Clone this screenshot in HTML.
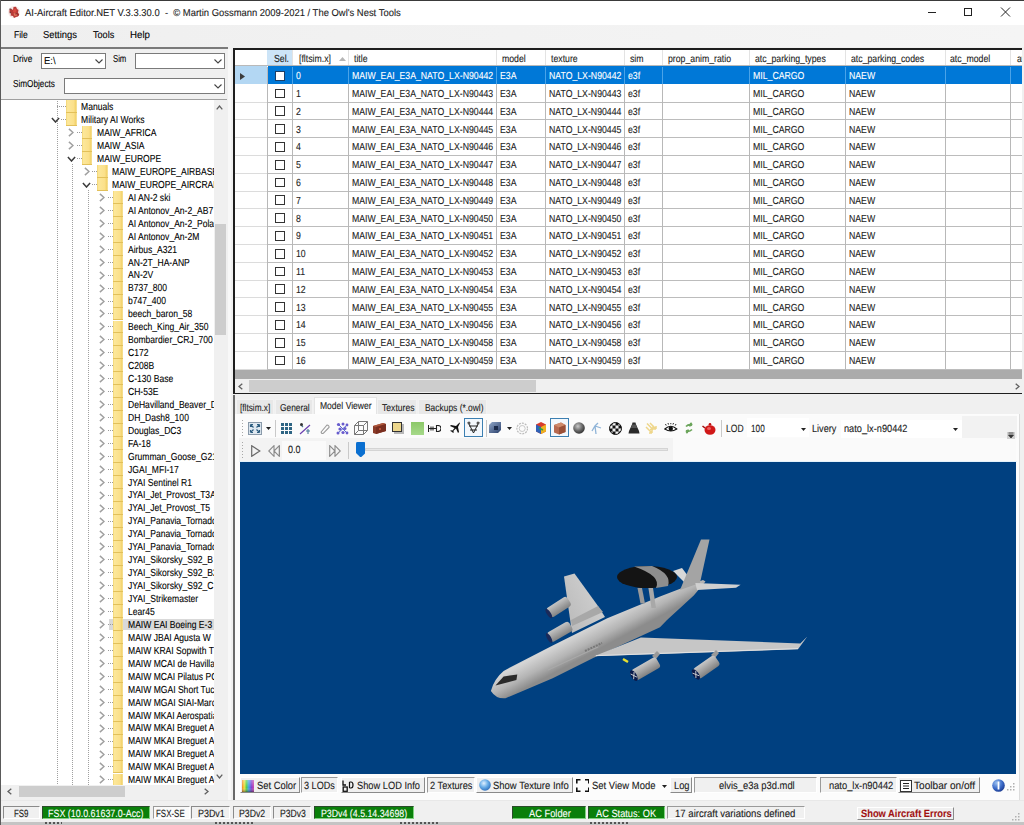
<!DOCTYPE html><html><head><meta charset="utf-8"><style>
html,body{margin:0;padding:0;width:1024px;height:825px;overflow:hidden;background:#f0f0f0}
div,span,svg{position:absolute}
.t{-webkit-text-stroke:0.1px currentColor;text-rendering:geometricPrecision;white-space:pre;line-height:1;font-family:"Liberation Sans",sans-serif;transform-origin:0 0}
</style></head><body>
<div style="left:0.00px;top:0.00px;width:1024.00px;height:825.00px;background:#f0f0f0"></div><div style="left:0.00px;top:0.00px;width:1024.00px;height:1.00px;background:#3a3a3a"></div><div style="left:0.00px;top:0.00px;width:1.00px;height:825.00px;background:#5a5a5a"></div><div style="left:1.00px;top:1.00px;width:1023.00px;height:23.50px;background:#fff"></div><svg style="left:7.00px;top:5.00px" width="14" height="14" viewBox="0 0 14 14"><circle cx="7" cy="7" r="6" fill="#f8e8e6"/><path d="M2.5 4.5 L4 3.5 L6 5 L6.5 2 L9 1.8 L10 4 L11.5 5 L11 7.5 L12.3 9.5 L11 11.5 L9 12 L7 13 L6 11 L3.5 10.5 L4 8.5 L2.5 7 Z" fill="#b83a36"/><path d="M6.5 4 L9 3.5 L9.5 6 L8 8 L6 7 Z" fill="#d84a40"/><path d="M6.5 8.5 L9 8 L10 10.5 L7.5 11 Z" fill="#e07a60"/><path d="M8 9 L10.5 8.5 L11.5 10.5" fill="none" stroke="#8a2a2a" stroke-width="0.9"/><rect x="2.5" y="3.5" width="1.3" height="1.3" fill="#555"/><rect x="2.6" y="6.8" width="1.5" height="1.5" fill="#7a3a3a"/></svg><span class="t" style="left:24.50px;top:9.00px;font-size:10px;color:#1a1a1a;transform:scaleX(0.9427);">AI-Aircraft Editor.NET V.3.3.30.0  -  © Martin Gossmann 2009-2021 / The Owl&#x27;s Nest Tools</span><div style="left:928.00px;top:11.70px;width:8.00px;height:1.00px;background:#222"></div><div style="left:964.00px;top:8.30px;width:8.00px;height:7.30px;border:1px solid #222;box-sizing:border-box"></div><svg style="left:1000.00px;top:7.00px" width="11" height="10" viewBox="0 0 11 10"><path d="M1 0.5 L10 9.5 M10 0.5 L1 9.5" stroke="#222" stroke-width="1"/></svg><div style="left:1.00px;top:24.50px;width:1023.00px;height:22.70px;background:linear-gradient(to right,#efefef,#f5f5f5)"></div><span class="t" style="left:13.70px;top:31.00px;font-size:10px;color:#000;transform:scaleX(0.8504);">File</span><span class="t" style="left:43.00px;top:31.00px;font-size:10px;color:#000;transform:scaleX(0.9410);">Settings</span><span class="t" style="left:92.50px;top:31.00px;font-size:10px;color:#000;transform:scaleX(0.9105);">Tools</span><span class="t" style="left:129.50px;top:31.00px;font-size:10px;color:#000;transform:scaleX(0.9723);">Help</span><div style="left:1.00px;top:47.00px;width:227.00px;height:1.80px;background:#7a7a7a"></div><span class="t" style="left:13.10px;top:55.00px;font-size:10px;color:#000;transform:scaleX(0.8312);">Drive</span><span class="t" style="left:113.30px;top:55.00px;font-size:10px;color:#000;transform:scaleX(0.7724);">Sim</span><span class="t" style="left:13.10px;top:80.00px;font-size:10px;color:#000;transform:scaleX(0.8196);">SimObjects</span><div style="left:41.20px;top:53.00px;width:64.40px;height:16.40px;background:#fff;border:1px solid #7a7a7a;box-sizing:border-box"></div><svg style="left:94.60px;top:58.70px" width="8" height="5" viewBox="0 0 8 5"><path d="M0.5 0.5 L4 4 L7.5 0.5" fill="none" stroke="#444" stroke-width="1.1"/></svg><span class="t" style="left:44.20px;top:57.00px;font-size:10px;color:#000;transform:scaleX(0.9403);">E:\</span><div style="left:135.00px;top:53.00px;width:90.00px;height:16.40px;background:#fff;border:1px solid #7a7a7a;box-sizing:border-box"></div><svg style="left:214.00px;top:58.70px" width="8" height="5" viewBox="0 0 8 5"><path d="M0.5 0.5 L4 4 L7.5 0.5" fill="none" stroke="#444" stroke-width="1.1"/></svg><div style="left:64.40px;top:78.00px;width:160.60px;height:16.40px;background:#fff;border:1px solid #7a7a7a;box-sizing:border-box"></div><svg style="left:214.00px;top:83.70px" width="8" height="5" viewBox="0 0 8 5"><path d="M0.5 0.5 L4 4 L7.5 0.5" fill="none" stroke="#444" stroke-width="1.1"/></svg><div style="left:1.00px;top:99.30px;width:226.30px;height:1.00px;background:#a0a0a0"></div><div style="left:1.00px;top:100.30px;width:212.60px;height:684.70px;overflow:hidden;background:#fff"><div style="left:55.50px;top:-1.30px;width:1.00px;height:701.00px;background:repeating-linear-gradient(to bottom,#a0a0a0 0 1px,transparent 1px 2px)"></div><div style="left:71.00px;top:63.37px;width:1.00px;height:636.33px;background:repeating-linear-gradient(to bottom,#a0a0a0 0 1px,transparent 1px 2px)"></div><div style="left:86.50px;top:89.26px;width:1.00px;height:610.44px;background:repeating-linear-gradient(to bottom,#a0a0a0 0 1px,transparent 1px 2px)"></div><div style="left:108.00px;top:518.72px;width:105.00px;height:11.20px;background:#d9d9d9"></div><div style="left:56.00px;top:6.10px;width:9.00px;height:1.00px;background:repeating-linear-gradient(to left,#9a9a9a 0 1px,transparent 1px 2px)"></div><div style="left:65.00px;top:0.20px;width:10.50px;height:11.90px;background:linear-gradient(to right,#f2d470 0,#fce79a 15%,#fbe08a 70%,#f0cf66 92%,#fdf3c8 100%)"></div><div style="left:65.00px;top:12.10px;width:10.50px;height:1.00px;background:#e2c05a"></div><span class="t" style="left:80.00px;top:2.70px;font-size:10.2px;color:#000;transform:scaleX(0.8400);">Manuals</span><div style="left:59.40px;top:19.04px;width:5.60px;height:1.00px;background:repeating-linear-gradient(to left,#9a9a9a 0 1px,transparent 1px 2px)"></div><svg style="left:49.90px;top:16.54px" width="9" height="6" viewBox="0 0 9 6"><path d="M0.9 0.9 L4.5 5 L8.1 0.9" fill="none" stroke="#3c3c3c" stroke-width="1.5"/></svg><div style="left:65.00px;top:13.14px;width:10.50px;height:11.90px;background:linear-gradient(to right,#f2d470 0,#fce79a 15%,#fbe08a 70%,#f0cf66 92%,#fdf3c8 100%)"></div><div style="left:65.00px;top:25.04px;width:10.50px;height:1.00px;background:#e2c05a"></div><span class="t" style="left:80.00px;top:15.70px;font-size:10.2px;color:#000;transform:scaleX(0.8400);">Military AI Works</span><div style="left:75.00px;top:31.99px;width:5.60px;height:1.00px;background:repeating-linear-gradient(to left,#9a9a9a 0 1px,transparent 1px 2px)"></div><svg style="left:67.00px;top:27.99px" width="6" height="9" viewBox="0 0 6 9"><path d="M0.9 0.9 L5 4.5 L0.9 8.1" fill="none" stroke="#a0a0a0" stroke-width="1.5"/></svg><div style="left:80.60px;top:26.09px;width:10.50px;height:11.90px;background:linear-gradient(to right,#f2d470 0,#fce79a 15%,#fbe08a 70%,#f0cf66 92%,#fdf3c8 100%)"></div><div style="left:80.60px;top:37.99px;width:10.50px;height:1.00px;background:#e2c05a"></div><span class="t" style="left:95.60px;top:28.70px;font-size:10.2px;color:#000;transform:scaleX(0.8400);">MAIW_AFRICA</span><div style="left:75.00px;top:44.93px;width:5.60px;height:1.00px;background:repeating-linear-gradient(to left,#9a9a9a 0 1px,transparent 1px 2px)"></div><svg style="left:67.00px;top:40.93px" width="6" height="9" viewBox="0 0 6 9"><path d="M0.9 0.9 L5 4.5 L0.9 8.1" fill="none" stroke="#a0a0a0" stroke-width="1.5"/></svg><div style="left:80.60px;top:39.03px;width:10.50px;height:11.90px;background:linear-gradient(to right,#f2d470 0,#fce79a 15%,#fbe08a 70%,#f0cf66 92%,#fdf3c8 100%)"></div><div style="left:80.60px;top:50.93px;width:10.50px;height:1.00px;background:#e2c05a"></div><span class="t" style="left:95.60px;top:41.70px;font-size:10.2px;color:#000;transform:scaleX(0.8400);">MAIW_ASIA</span><div style="left:75.00px;top:57.87px;width:5.60px;height:1.00px;background:repeating-linear-gradient(to left,#9a9a9a 0 1px,transparent 1px 2px)"></div><svg style="left:65.50px;top:55.37px" width="9" height="6" viewBox="0 0 9 6"><path d="M0.9 0.9 L4.5 5 L8.1 0.9" fill="none" stroke="#3c3c3c" stroke-width="1.5"/></svg><div style="left:80.60px;top:51.97px;width:10.50px;height:11.90px;background:linear-gradient(to right,#f2d470 0,#fce79a 15%,#fbe08a 70%,#f0cf66 92%,#fdf3c8 100%)"></div><div style="left:80.60px;top:63.87px;width:10.50px;height:1.00px;background:#e2c05a"></div><span class="t" style="left:95.60px;top:54.70px;font-size:10.2px;color:#000;transform:scaleX(0.8400);">MAIW_EUROPE</span><div style="left:90.60px;top:70.82px;width:5.60px;height:1.00px;background:repeating-linear-gradient(to left,#9a9a9a 0 1px,transparent 1px 2px)"></div><svg style="left:82.60px;top:66.82px" width="6" height="9" viewBox="0 0 6 9"><path d="M0.9 0.9 L5 4.5 L0.9 8.1" fill="none" stroke="#a0a0a0" stroke-width="1.5"/></svg><div style="left:96.20px;top:64.92px;width:10.50px;height:11.90px;background:linear-gradient(to right,#f2d470 0,#fce79a 15%,#fbe08a 70%,#f0cf66 92%,#fdf3c8 100%)"></div><div style="left:96.20px;top:76.82px;width:10.50px;height:1.00px;background:#e2c05a"></div><span class="t" style="left:111.20px;top:67.70px;font-size:10.2px;color:#000;transform:scaleX(0.8400);">MAIW_EUROPE_AIRBASES</span><div style="left:90.60px;top:83.76px;width:5.60px;height:1.00px;background:repeating-linear-gradient(to left,#9a9a9a 0 1px,transparent 1px 2px)"></div><svg style="left:81.10px;top:81.26px" width="9" height="6" viewBox="0 0 9 6"><path d="M0.9 0.9 L4.5 5 L8.1 0.9" fill="none" stroke="#3c3c3c" stroke-width="1.5"/></svg><div style="left:96.20px;top:77.86px;width:10.50px;height:11.90px;background:linear-gradient(to right,#f2d470 0,#fce79a 15%,#fbe08a 70%,#f0cf66 92%,#fdf3c8 100%)"></div><div style="left:96.20px;top:89.76px;width:10.50px;height:1.00px;background:#e2c05a"></div><span class="t" style="left:111.20px;top:80.70px;font-size:10.2px;color:#000;transform:scaleX(0.8400);">MAIW_EUROPE_AIRCRAFT</span><div style="left:106.20px;top:96.70px;width:5.60px;height:1.00px;background:repeating-linear-gradient(to left,#9a9a9a 0 1px,transparent 1px 2px)"></div><svg style="left:98.20px;top:92.70px" width="6" height="9" viewBox="0 0 6 9"><path d="M0.9 0.9 L5 4.5 L0.9 8.1" fill="none" stroke="#a0a0a0" stroke-width="1.5"/></svg><div style="left:111.80px;top:90.80px;width:10.50px;height:11.90px;background:linear-gradient(to right,#f2d470 0,#fce79a 15%,#fbe08a 70%,#f0cf66 92%,#fdf3c8 100%)"></div><div style="left:111.80px;top:102.70px;width:10.50px;height:1.00px;background:#e2c05a"></div><span class="t" style="left:126.80px;top:93.70px;font-size:10.2px;color:#000;transform:scaleX(0.8400);">AI AN-2 ski</span><div style="left:106.20px;top:109.64px;width:5.60px;height:1.00px;background:repeating-linear-gradient(to left,#9a9a9a 0 1px,transparent 1px 2px)"></div><svg style="left:98.20px;top:105.64px" width="6" height="9" viewBox="0 0 6 9"><path d="M0.9 0.9 L5 4.5 L0.9 8.1" fill="none" stroke="#a0a0a0" stroke-width="1.5"/></svg><div style="left:111.80px;top:103.74px;width:10.50px;height:11.90px;background:linear-gradient(to right,#f2d470 0,#fce79a 15%,#fbe08a 70%,#f0cf66 92%,#fdf3c8 100%)"></div><div style="left:111.80px;top:115.64px;width:10.50px;height:1.00px;background:#e2c05a"></div><span class="t" style="left:126.80px;top:106.70px;font-size:10.2px;color:#000;transform:scaleX(0.8400);">AI Antonov_An-2_AB7</span><div style="left:106.20px;top:122.59px;width:5.60px;height:1.00px;background:repeating-linear-gradient(to left,#9a9a9a 0 1px,transparent 1px 2px)"></div><svg style="left:98.20px;top:118.59px" width="6" height="9" viewBox="0 0 6 9"><path d="M0.9 0.9 L5 4.5 L0.9 8.1" fill="none" stroke="#a0a0a0" stroke-width="1.5"/></svg><div style="left:111.80px;top:116.69px;width:10.50px;height:11.90px;background:linear-gradient(to right,#f2d470 0,#fce79a 15%,#fbe08a 70%,#f0cf66 92%,#fdf3c8 100%)"></div><div style="left:111.80px;top:128.59px;width:10.50px;height:1.00px;background:#e2c05a"></div><span class="t" style="left:126.80px;top:119.70px;font-size:10.2px;color:#000;transform:scaleX(0.8400);">AI Antonov_An-2_Poland</span><div style="left:106.20px;top:135.53px;width:5.60px;height:1.00px;background:repeating-linear-gradient(to left,#9a9a9a 0 1px,transparent 1px 2px)"></div><svg style="left:98.20px;top:131.53px" width="6" height="9" viewBox="0 0 6 9"><path d="M0.9 0.9 L5 4.5 L0.9 8.1" fill="none" stroke="#a0a0a0" stroke-width="1.5"/></svg><div style="left:111.80px;top:129.63px;width:10.50px;height:11.90px;background:linear-gradient(to right,#f2d470 0,#fce79a 15%,#fbe08a 70%,#f0cf66 92%,#fdf3c8 100%)"></div><div style="left:111.80px;top:141.53px;width:10.50px;height:1.00px;background:#e2c05a"></div><span class="t" style="left:126.80px;top:132.70px;font-size:10.2px;color:#000;transform:scaleX(0.8400);">AI Antonov_An-2M</span><div style="left:106.20px;top:148.47px;width:5.60px;height:1.00px;background:repeating-linear-gradient(to left,#9a9a9a 0 1px,transparent 1px 2px)"></div><svg style="left:98.20px;top:144.47px" width="6" height="9" viewBox="0 0 6 9"><path d="M0.9 0.9 L5 4.5 L0.9 8.1" fill="none" stroke="#a0a0a0" stroke-width="1.5"/></svg><div style="left:111.80px;top:142.57px;width:10.50px;height:11.90px;background:linear-gradient(to right,#f2d470 0,#fce79a 15%,#fbe08a 70%,#f0cf66 92%,#fdf3c8 100%)"></div><div style="left:111.80px;top:154.47px;width:10.50px;height:1.00px;background:#e2c05a"></div><span class="t" style="left:126.80px;top:145.70px;font-size:10.2px;color:#000;transform:scaleX(0.8400);">Airbus_A321</span><div style="left:106.20px;top:161.42px;width:5.60px;height:1.00px;background:repeating-linear-gradient(to left,#9a9a9a 0 1px,transparent 1px 2px)"></div><svg style="left:98.20px;top:157.42px" width="6" height="9" viewBox="0 0 6 9"><path d="M0.9 0.9 L5 4.5 L0.9 8.1" fill="none" stroke="#a0a0a0" stroke-width="1.5"/></svg><div style="left:111.80px;top:155.52px;width:10.50px;height:11.90px;background:linear-gradient(to right,#f2d470 0,#fce79a 15%,#fbe08a 70%,#f0cf66 92%,#fdf3c8 100%)"></div><div style="left:111.80px;top:167.42px;width:10.50px;height:1.00px;background:#e2c05a"></div><span class="t" style="left:126.80px;top:158.70px;font-size:10.2px;color:#000;transform:scaleX(0.8400);">AN-2T_HA-ANP</span><div style="left:106.20px;top:174.36px;width:5.60px;height:1.00px;background:repeating-linear-gradient(to left,#9a9a9a 0 1px,transparent 1px 2px)"></div><svg style="left:98.20px;top:170.36px" width="6" height="9" viewBox="0 0 6 9"><path d="M0.9 0.9 L5 4.5 L0.9 8.1" fill="none" stroke="#a0a0a0" stroke-width="1.5"/></svg><div style="left:111.80px;top:168.46px;width:10.50px;height:11.90px;background:linear-gradient(to right,#f2d470 0,#fce79a 15%,#fbe08a 70%,#f0cf66 92%,#fdf3c8 100%)"></div><div style="left:111.80px;top:180.36px;width:10.50px;height:1.00px;background:#e2c05a"></div><span class="t" style="left:126.80px;top:170.70px;font-size:10.2px;color:#000;transform:scaleX(0.8400);">AN-2V</span><div style="left:106.20px;top:187.30px;width:5.60px;height:1.00px;background:repeating-linear-gradient(to left,#9a9a9a 0 1px,transparent 1px 2px)"></div><svg style="left:98.20px;top:183.30px" width="6" height="9" viewBox="0 0 6 9"><path d="M0.9 0.9 L5 4.5 L0.9 8.1" fill="none" stroke="#a0a0a0" stroke-width="1.5"/></svg><div style="left:111.80px;top:181.40px;width:10.50px;height:11.90px;background:linear-gradient(to right,#f2d470 0,#fce79a 15%,#fbe08a 70%,#f0cf66 92%,#fdf3c8 100%)"></div><div style="left:111.80px;top:193.30px;width:10.50px;height:1.00px;background:#e2c05a"></div><span class="t" style="left:126.80px;top:183.70px;font-size:10.2px;color:#000;transform:scaleX(0.8400);">B737_800</span><div style="left:106.20px;top:200.24px;width:5.60px;height:1.00px;background:repeating-linear-gradient(to left,#9a9a9a 0 1px,transparent 1px 2px)"></div><svg style="left:98.20px;top:196.24px" width="6" height="9" viewBox="0 0 6 9"><path d="M0.9 0.9 L5 4.5 L0.9 8.1" fill="none" stroke="#a0a0a0" stroke-width="1.5"/></svg><div style="left:111.80px;top:194.34px;width:10.50px;height:11.90px;background:linear-gradient(to right,#f2d470 0,#fce79a 15%,#fbe08a 70%,#f0cf66 92%,#fdf3c8 100%)"></div><div style="left:111.80px;top:206.24px;width:10.50px;height:1.00px;background:#e2c05a"></div><span class="t" style="left:126.80px;top:196.70px;font-size:10.2px;color:#000;transform:scaleX(0.8400);">b747_400</span><div style="left:106.20px;top:213.19px;width:5.60px;height:1.00px;background:repeating-linear-gradient(to left,#9a9a9a 0 1px,transparent 1px 2px)"></div><svg style="left:98.20px;top:209.19px" width="6" height="9" viewBox="0 0 6 9"><path d="M0.9 0.9 L5 4.5 L0.9 8.1" fill="none" stroke="#a0a0a0" stroke-width="1.5"/></svg><div style="left:111.80px;top:207.29px;width:10.50px;height:11.90px;background:linear-gradient(to right,#f2d470 0,#fce79a 15%,#fbe08a 70%,#f0cf66 92%,#fdf3c8 100%)"></div><div style="left:111.80px;top:219.19px;width:10.50px;height:1.00px;background:#e2c05a"></div><span class="t" style="left:126.80px;top:209.70px;font-size:10.2px;color:#000;transform:scaleX(0.8400);">beech_baron_58</span><div style="left:106.20px;top:226.13px;width:5.60px;height:1.00px;background:repeating-linear-gradient(to left,#9a9a9a 0 1px,transparent 1px 2px)"></div><svg style="left:98.20px;top:222.13px" width="6" height="9" viewBox="0 0 6 9"><path d="M0.9 0.9 L5 4.5 L0.9 8.1" fill="none" stroke="#a0a0a0" stroke-width="1.5"/></svg><div style="left:111.80px;top:220.23px;width:10.50px;height:11.90px;background:linear-gradient(to right,#f2d470 0,#fce79a 15%,#fbe08a 70%,#f0cf66 92%,#fdf3c8 100%)"></div><div style="left:111.80px;top:232.13px;width:10.50px;height:1.00px;background:#e2c05a"></div><span class="t" style="left:126.80px;top:222.70px;font-size:10.2px;color:#000;transform:scaleX(0.8400);">Beech_King_Air_350</span><div style="left:106.20px;top:239.07px;width:5.60px;height:1.00px;background:repeating-linear-gradient(to left,#9a9a9a 0 1px,transparent 1px 2px)"></div><svg style="left:98.20px;top:235.07px" width="6" height="9" viewBox="0 0 6 9"><path d="M0.9 0.9 L5 4.5 L0.9 8.1" fill="none" stroke="#a0a0a0" stroke-width="1.5"/></svg><div style="left:111.80px;top:233.17px;width:10.50px;height:11.90px;background:linear-gradient(to right,#f2d470 0,#fce79a 15%,#fbe08a 70%,#f0cf66 92%,#fdf3c8 100%)"></div><div style="left:111.80px;top:245.07px;width:10.50px;height:1.00px;background:#e2c05a"></div><span class="t" style="left:126.80px;top:235.70px;font-size:10.2px;color:#000;transform:scaleX(0.8400);">Bombardier_CRJ_700</span><div style="left:106.20px;top:252.02px;width:5.60px;height:1.00px;background:repeating-linear-gradient(to left,#9a9a9a 0 1px,transparent 1px 2px)"></div><svg style="left:98.20px;top:248.02px" width="6" height="9" viewBox="0 0 6 9"><path d="M0.9 0.9 L5 4.5 L0.9 8.1" fill="none" stroke="#a0a0a0" stroke-width="1.5"/></svg><div style="left:111.80px;top:246.12px;width:10.50px;height:11.90px;background:linear-gradient(to right,#f2d470 0,#fce79a 15%,#fbe08a 70%,#f0cf66 92%,#fdf3c8 100%)"></div><div style="left:111.80px;top:258.02px;width:10.50px;height:1.00px;background:#e2c05a"></div><span class="t" style="left:126.80px;top:248.70px;font-size:10.2px;color:#000;transform:scaleX(0.8400);">C172</span><div style="left:106.20px;top:264.96px;width:5.60px;height:1.00px;background:repeating-linear-gradient(to left,#9a9a9a 0 1px,transparent 1px 2px)"></div><svg style="left:98.20px;top:260.96px" width="6" height="9" viewBox="0 0 6 9"><path d="M0.9 0.9 L5 4.5 L0.9 8.1" fill="none" stroke="#a0a0a0" stroke-width="1.5"/></svg><div style="left:111.80px;top:259.06px;width:10.50px;height:11.90px;background:linear-gradient(to right,#f2d470 0,#fce79a 15%,#fbe08a 70%,#f0cf66 92%,#fdf3c8 100%)"></div><div style="left:111.80px;top:270.96px;width:10.50px;height:1.00px;background:#e2c05a"></div><span class="t" style="left:126.80px;top:261.70px;font-size:10.2px;color:#000;transform:scaleX(0.8400);">C208B</span><div style="left:106.20px;top:277.90px;width:5.60px;height:1.00px;background:repeating-linear-gradient(to left,#9a9a9a 0 1px,transparent 1px 2px)"></div><svg style="left:98.20px;top:273.90px" width="6" height="9" viewBox="0 0 6 9"><path d="M0.9 0.9 L5 4.5 L0.9 8.1" fill="none" stroke="#a0a0a0" stroke-width="1.5"/></svg><div style="left:111.80px;top:272.00px;width:10.50px;height:11.90px;background:linear-gradient(to right,#f2d470 0,#fce79a 15%,#fbe08a 70%,#f0cf66 92%,#fdf3c8 100%)"></div><div style="left:111.80px;top:283.90px;width:10.50px;height:1.00px;background:#e2c05a"></div><span class="t" style="left:126.80px;top:274.70px;font-size:10.2px;color:#000;transform:scaleX(0.8400);">C-130 Base</span><div style="left:106.20px;top:290.85px;width:5.60px;height:1.00px;background:repeating-linear-gradient(to left,#9a9a9a 0 1px,transparent 1px 2px)"></div><svg style="left:98.20px;top:286.85px" width="6" height="9" viewBox="0 0 6 9"><path d="M0.9 0.9 L5 4.5 L0.9 8.1" fill="none" stroke="#a0a0a0" stroke-width="1.5"/></svg><div style="left:111.80px;top:284.95px;width:10.50px;height:11.90px;background:linear-gradient(to right,#f2d470 0,#fce79a 15%,#fbe08a 70%,#f0cf66 92%,#fdf3c8 100%)"></div><div style="left:111.80px;top:296.85px;width:10.50px;height:1.00px;background:#e2c05a"></div><span class="t" style="left:126.80px;top:287.70px;font-size:10.2px;color:#000;transform:scaleX(0.8400);">CH-53E</span><div style="left:106.20px;top:303.79px;width:5.60px;height:1.00px;background:repeating-linear-gradient(to left,#9a9a9a 0 1px,transparent 1px 2px)"></div><svg style="left:98.20px;top:299.79px" width="6" height="9" viewBox="0 0 6 9"><path d="M0.9 0.9 L5 4.5 L0.9 8.1" fill="none" stroke="#a0a0a0" stroke-width="1.5"/></svg><div style="left:111.80px;top:297.89px;width:10.50px;height:11.90px;background:linear-gradient(to right,#f2d470 0,#fce79a 15%,#fbe08a 70%,#f0cf66 92%,#fdf3c8 100%)"></div><div style="left:111.80px;top:309.79px;width:10.50px;height:1.00px;background:#e2c05a"></div><span class="t" style="left:126.80px;top:300.70px;font-size:10.2px;color:#000;transform:scaleX(0.8400);">DeHavilland_Beaver_DHC2</span><div style="left:106.20px;top:316.73px;width:5.60px;height:1.00px;background:repeating-linear-gradient(to left,#9a9a9a 0 1px,transparent 1px 2px)"></div><svg style="left:98.20px;top:312.73px" width="6" height="9" viewBox="0 0 6 9"><path d="M0.9 0.9 L5 4.5 L0.9 8.1" fill="none" stroke="#a0a0a0" stroke-width="1.5"/></svg><div style="left:111.80px;top:310.83px;width:10.50px;height:11.90px;background:linear-gradient(to right,#f2d470 0,#fce79a 15%,#fbe08a 70%,#f0cf66 92%,#fdf3c8 100%)"></div><div style="left:111.80px;top:322.73px;width:10.50px;height:1.00px;background:#e2c05a"></div><span class="t" style="left:126.80px;top:313.70px;font-size:10.2px;color:#000;transform:scaleX(0.8400);">DH_Dash8_100</span><div style="left:106.20px;top:329.68px;width:5.60px;height:1.00px;background:repeating-linear-gradient(to left,#9a9a9a 0 1px,transparent 1px 2px)"></div><svg style="left:98.20px;top:325.68px" width="6" height="9" viewBox="0 0 6 9"><path d="M0.9 0.9 L5 4.5 L0.9 8.1" fill="none" stroke="#a0a0a0" stroke-width="1.5"/></svg><div style="left:111.80px;top:323.78px;width:10.50px;height:11.90px;background:linear-gradient(to right,#f2d470 0,#fce79a 15%,#fbe08a 70%,#f0cf66 92%,#fdf3c8 100%)"></div><div style="left:111.80px;top:335.68px;width:10.50px;height:1.00px;background:#e2c05a"></div><span class="t" style="left:126.80px;top:326.70px;font-size:10.2px;color:#000;transform:scaleX(0.8400);">Douglas_DC3</span><div style="left:106.20px;top:342.62px;width:5.60px;height:1.00px;background:repeating-linear-gradient(to left,#9a9a9a 0 1px,transparent 1px 2px)"></div><svg style="left:98.20px;top:338.62px" width="6" height="9" viewBox="0 0 6 9"><path d="M0.9 0.9 L5 4.5 L0.9 8.1" fill="none" stroke="#a0a0a0" stroke-width="1.5"/></svg><div style="left:111.80px;top:336.72px;width:10.50px;height:11.90px;background:linear-gradient(to right,#f2d470 0,#fce79a 15%,#fbe08a 70%,#f0cf66 92%,#fdf3c8 100%)"></div><div style="left:111.80px;top:348.62px;width:10.50px;height:1.00px;background:#e2c05a"></div><span class="t" style="left:126.80px;top:339.70px;font-size:10.2px;color:#000;transform:scaleX(0.8400);">FA-18</span><div style="left:106.20px;top:355.56px;width:5.60px;height:1.00px;background:repeating-linear-gradient(to left,#9a9a9a 0 1px,transparent 1px 2px)"></div><svg style="left:98.20px;top:351.56px" width="6" height="9" viewBox="0 0 6 9"><path d="M0.9 0.9 L5 4.5 L0.9 8.1" fill="none" stroke="#a0a0a0" stroke-width="1.5"/></svg><div style="left:111.80px;top:349.66px;width:10.50px;height:11.90px;background:linear-gradient(to right,#f2d470 0,#fce79a 15%,#fbe08a 70%,#f0cf66 92%,#fdf3c8 100%)"></div><div style="left:111.80px;top:361.56px;width:10.50px;height:1.00px;background:#e2c05a"></div><span class="t" style="left:126.80px;top:352.70px;font-size:10.2px;color:#000;transform:scaleX(0.8400);">Grumman_Goose_G21A</span><div style="left:106.20px;top:368.50px;width:5.60px;height:1.00px;background:repeating-linear-gradient(to left,#9a9a9a 0 1px,transparent 1px 2px)"></div><svg style="left:98.20px;top:364.50px" width="6" height="9" viewBox="0 0 6 9"><path d="M0.9 0.9 L5 4.5 L0.9 8.1" fill="none" stroke="#a0a0a0" stroke-width="1.5"/></svg><div style="left:111.80px;top:362.60px;width:10.50px;height:11.90px;background:linear-gradient(to right,#f2d470 0,#fce79a 15%,#fbe08a 70%,#f0cf66 92%,#fdf3c8 100%)"></div><div style="left:111.80px;top:374.50px;width:10.50px;height:1.00px;background:#e2c05a"></div><span class="t" style="left:126.80px;top:365.70px;font-size:10.2px;color:#000;transform:scaleX(0.8400);">JGAI_MFI-17</span><div style="left:106.20px;top:381.45px;width:5.60px;height:1.00px;background:repeating-linear-gradient(to left,#9a9a9a 0 1px,transparent 1px 2px)"></div><svg style="left:98.20px;top:377.45px" width="6" height="9" viewBox="0 0 6 9"><path d="M0.9 0.9 L5 4.5 L0.9 8.1" fill="none" stroke="#a0a0a0" stroke-width="1.5"/></svg><div style="left:111.80px;top:375.55px;width:10.50px;height:11.90px;background:linear-gradient(to right,#f2d470 0,#fce79a 15%,#fbe08a 70%,#f0cf66 92%,#fdf3c8 100%)"></div><div style="left:111.80px;top:387.45px;width:10.50px;height:1.00px;background:#e2c05a"></div><span class="t" style="left:126.80px;top:378.70px;font-size:10.2px;color:#000;transform:scaleX(0.8400);">JYAI Sentinel R1</span><div style="left:106.20px;top:394.39px;width:5.60px;height:1.00px;background:repeating-linear-gradient(to left,#9a9a9a 0 1px,transparent 1px 2px)"></div><svg style="left:98.20px;top:390.39px" width="6" height="9" viewBox="0 0 6 9"><path d="M0.9 0.9 L5 4.5 L0.9 8.1" fill="none" stroke="#a0a0a0" stroke-width="1.5"/></svg><div style="left:111.80px;top:388.49px;width:10.50px;height:11.90px;background:linear-gradient(to right,#f2d470 0,#fce79a 15%,#fbe08a 70%,#f0cf66 92%,#fdf3c8 100%)"></div><div style="left:111.80px;top:400.39px;width:10.50px;height:1.00px;background:#e2c05a"></div><span class="t" style="left:126.80px;top:390.70px;font-size:10.2px;color:#000;transform:scaleX(0.8400);">JYAI_Jet_Provost_T3A</span><div style="left:106.20px;top:407.33px;width:5.60px;height:1.00px;background:repeating-linear-gradient(to left,#9a9a9a 0 1px,transparent 1px 2px)"></div><svg style="left:98.20px;top:403.33px" width="6" height="9" viewBox="0 0 6 9"><path d="M0.9 0.9 L5 4.5 L0.9 8.1" fill="none" stroke="#a0a0a0" stroke-width="1.5"/></svg><div style="left:111.80px;top:401.43px;width:10.50px;height:11.90px;background:linear-gradient(to right,#f2d470 0,#fce79a 15%,#fbe08a 70%,#f0cf66 92%,#fdf3c8 100%)"></div><div style="left:111.80px;top:413.33px;width:10.50px;height:1.00px;background:#e2c05a"></div><span class="t" style="left:126.80px;top:403.70px;font-size:10.2px;color:#000;transform:scaleX(0.8400);">JYAI_Jet_Provost_T5</span><div style="left:106.20px;top:420.28px;width:5.60px;height:1.00px;background:repeating-linear-gradient(to left,#9a9a9a 0 1px,transparent 1px 2px)"></div><svg style="left:98.20px;top:416.28px" width="6" height="9" viewBox="0 0 6 9"><path d="M0.9 0.9 L5 4.5 L0.9 8.1" fill="none" stroke="#a0a0a0" stroke-width="1.5"/></svg><div style="left:111.80px;top:414.38px;width:10.50px;height:11.90px;background:linear-gradient(to right,#f2d470 0,#fce79a 15%,#fbe08a 70%,#f0cf66 92%,#fdf3c8 100%)"></div><div style="left:111.80px;top:426.28px;width:10.50px;height:1.00px;background:#e2c05a"></div><span class="t" style="left:126.80px;top:416.70px;font-size:10.2px;color:#000;transform:scaleX(0.8400);">JYAI_Panavia_Tornado_F3</span><div style="left:106.20px;top:433.22px;width:5.60px;height:1.00px;background:repeating-linear-gradient(to left,#9a9a9a 0 1px,transparent 1px 2px)"></div><svg style="left:98.20px;top:429.22px" width="6" height="9" viewBox="0 0 6 9"><path d="M0.9 0.9 L5 4.5 L0.9 8.1" fill="none" stroke="#a0a0a0" stroke-width="1.5"/></svg><div style="left:111.80px;top:427.32px;width:10.50px;height:11.90px;background:linear-gradient(to right,#f2d470 0,#fce79a 15%,#fbe08a 70%,#f0cf66 92%,#fdf3c8 100%)"></div><div style="left:111.80px;top:439.22px;width:10.50px;height:1.00px;background:#e2c05a"></div><span class="t" style="left:126.80px;top:429.70px;font-size:10.2px;color:#000;transform:scaleX(0.8400);">JYAI_Panavia_Tornado_GR4</span><div style="left:106.20px;top:446.16px;width:5.60px;height:1.00px;background:repeating-linear-gradient(to left,#9a9a9a 0 1px,transparent 1px 2px)"></div><svg style="left:98.20px;top:442.16px" width="6" height="9" viewBox="0 0 6 9"><path d="M0.9 0.9 L5 4.5 L0.9 8.1" fill="none" stroke="#a0a0a0" stroke-width="1.5"/></svg><div style="left:111.80px;top:440.26px;width:10.50px;height:11.90px;background:linear-gradient(to right,#f2d470 0,#fce79a 15%,#fbe08a 70%,#f0cf66 92%,#fdf3c8 100%)"></div><div style="left:111.80px;top:452.16px;width:10.50px;height:1.00px;background:#e2c05a"></div><span class="t" style="left:126.80px;top:442.70px;font-size:10.2px;color:#000;transform:scaleX(0.8400);">JYAI_Panavia_Tornado_IDS</span><div style="left:106.20px;top:459.10px;width:5.60px;height:1.00px;background:repeating-linear-gradient(to left,#9a9a9a 0 1px,transparent 1px 2px)"></div><svg style="left:98.20px;top:455.10px" width="6" height="9" viewBox="0 0 6 9"><path d="M0.9 0.9 L5 4.5 L0.9 8.1" fill="none" stroke="#a0a0a0" stroke-width="1.5"/></svg><div style="left:111.80px;top:453.20px;width:10.50px;height:11.90px;background:linear-gradient(to right,#f2d470 0,#fce79a 15%,#fbe08a 70%,#f0cf66 92%,#fdf3c8 100%)"></div><div style="left:111.80px;top:465.10px;width:10.50px;height:1.00px;background:#e2c05a"></div><span class="t" style="left:126.80px;top:455.70px;font-size:10.2px;color:#000;transform:scaleX(0.8400);">JYAI_Sikorsky_S92_B</span><div style="left:106.20px;top:472.05px;width:5.60px;height:1.00px;background:repeating-linear-gradient(to left,#9a9a9a 0 1px,transparent 1px 2px)"></div><svg style="left:98.20px;top:468.05px" width="6" height="9" viewBox="0 0 6 9"><path d="M0.9 0.9 L5 4.5 L0.9 8.1" fill="none" stroke="#a0a0a0" stroke-width="1.5"/></svg><div style="left:111.80px;top:466.15px;width:10.50px;height:11.90px;background:linear-gradient(to right,#f2d470 0,#fce79a 15%,#fbe08a 70%,#f0cf66 92%,#fdf3c8 100%)"></div><div style="left:111.80px;top:478.05px;width:10.50px;height:1.00px;background:#e2c05a"></div><span class="t" style="left:126.80px;top:468.70px;font-size:10.2px;color:#000;transform:scaleX(0.8400);">JYAI_Sikorsky_S92_B2</span><div style="left:106.20px;top:484.99px;width:5.60px;height:1.00px;background:repeating-linear-gradient(to left,#9a9a9a 0 1px,transparent 1px 2px)"></div><svg style="left:98.20px;top:480.99px" width="6" height="9" viewBox="0 0 6 9"><path d="M0.9 0.9 L5 4.5 L0.9 8.1" fill="none" stroke="#a0a0a0" stroke-width="1.5"/></svg><div style="left:111.80px;top:479.09px;width:10.50px;height:11.90px;background:linear-gradient(to right,#f2d470 0,#fce79a 15%,#fbe08a 70%,#f0cf66 92%,#fdf3c8 100%)"></div><div style="left:111.80px;top:490.99px;width:10.50px;height:1.00px;background:#e2c05a"></div><span class="t" style="left:126.80px;top:481.70px;font-size:10.2px;color:#000;transform:scaleX(0.8400);">JYAI_Sikorsky_S92_C</span><div style="left:106.20px;top:497.93px;width:5.60px;height:1.00px;background:repeating-linear-gradient(to left,#9a9a9a 0 1px,transparent 1px 2px)"></div><svg style="left:98.20px;top:493.93px" width="6" height="9" viewBox="0 0 6 9"><path d="M0.9 0.9 L5 4.5 L0.9 8.1" fill="none" stroke="#a0a0a0" stroke-width="1.5"/></svg><div style="left:111.80px;top:492.03px;width:10.50px;height:11.90px;background:linear-gradient(to right,#f2d470 0,#fce79a 15%,#fbe08a 70%,#f0cf66 92%,#fdf3c8 100%)"></div><div style="left:111.80px;top:503.93px;width:10.50px;height:1.00px;background:#e2c05a"></div><span class="t" style="left:126.80px;top:494.70px;font-size:10.2px;color:#000;transform:scaleX(0.8400);">JYAI_Strikemaster</span><div style="left:106.20px;top:510.88px;width:5.60px;height:1.00px;background:repeating-linear-gradient(to left,#9a9a9a 0 1px,transparent 1px 2px)"></div><svg style="left:98.20px;top:506.88px" width="6" height="9" viewBox="0 0 6 9"><path d="M0.9 0.9 L5 4.5 L0.9 8.1" fill="none" stroke="#a0a0a0" stroke-width="1.5"/></svg><div style="left:111.80px;top:504.98px;width:10.50px;height:11.90px;background:linear-gradient(to right,#f2d470 0,#fce79a 15%,#fbe08a 70%,#f0cf66 92%,#fdf3c8 100%)"></div><div style="left:111.80px;top:516.88px;width:10.50px;height:1.00px;background:#e2c05a"></div><span class="t" style="left:126.80px;top:507.70px;font-size:10.2px;color:#000;transform:scaleX(0.8400);">Lear45</span><div style="left:106.20px;top:523.82px;width:5.60px;height:1.00px;background:repeating-linear-gradient(to left,#9a9a9a 0 1px,transparent 1px 2px)"></div><svg style="left:98.20px;top:519.82px" width="6" height="9" viewBox="0 0 6 9"><path d="M0.9 0.9 L5 4.5 L0.9 8.1" fill="none" stroke="#a0a0a0" stroke-width="1.5"/></svg><div style="left:111.80px;top:517.92px;width:10.50px;height:11.90px;background:linear-gradient(to right,#f2d470 0,#fce79a 15%,#fbe08a 70%,#f0cf66 92%,#fdf3c8 100%)"></div><div style="left:111.80px;top:529.82px;width:10.50px;height:1.00px;background:#e2c05a"></div><span class="t" style="left:126.80px;top:520.70px;font-size:10.2px;color:#000;transform:scaleX(0.8400);">MAIW EAI Boeing E-3</span><div style="left:106.20px;top:536.76px;width:5.60px;height:1.00px;background:repeating-linear-gradient(to left,#9a9a9a 0 1px,transparent 1px 2px)"></div><svg style="left:98.20px;top:532.76px" width="6" height="9" viewBox="0 0 6 9"><path d="M0.9 0.9 L5 4.5 L0.9 8.1" fill="none" stroke="#a0a0a0" stroke-width="1.5"/></svg><div style="left:111.80px;top:530.86px;width:10.50px;height:11.90px;background:linear-gradient(to right,#f2d470 0,#fce79a 15%,#fbe08a 70%,#f0cf66 92%,#fdf3c8 100%)"></div><div style="left:111.80px;top:542.76px;width:10.50px;height:1.00px;background:#e2c05a"></div><span class="t" style="left:126.80px;top:533.70px;font-size:10.2px;color:#000;transform:scaleX(0.8400);">MAIW JBAI Agusta W</span><div style="left:106.20px;top:549.71px;width:5.60px;height:1.00px;background:repeating-linear-gradient(to left,#9a9a9a 0 1px,transparent 1px 2px)"></div><svg style="left:98.20px;top:545.71px" width="6" height="9" viewBox="0 0 6 9"><path d="M0.9 0.9 L5 4.5 L0.9 8.1" fill="none" stroke="#a0a0a0" stroke-width="1.5"/></svg><div style="left:111.80px;top:543.81px;width:10.50px;height:11.90px;background:linear-gradient(to right,#f2d470 0,#fce79a 15%,#fbe08a 70%,#f0cf66 92%,#fdf3c8 100%)"></div><div style="left:111.80px;top:555.71px;width:10.50px;height:1.00px;background:#e2c05a"></div><span class="t" style="left:126.80px;top:546.70px;font-size:10.2px;color:#000;transform:scaleX(0.8400);">MAIW KRAI Sopwith T</span><div style="left:106.20px;top:562.65px;width:5.60px;height:1.00px;background:repeating-linear-gradient(to left,#9a9a9a 0 1px,transparent 1px 2px)"></div><svg style="left:98.20px;top:558.65px" width="6" height="9" viewBox="0 0 6 9"><path d="M0.9 0.9 L5 4.5 L0.9 8.1" fill="none" stroke="#a0a0a0" stroke-width="1.5"/></svg><div style="left:111.80px;top:556.75px;width:10.50px;height:11.90px;background:linear-gradient(to right,#f2d470 0,#fce79a 15%,#fbe08a 70%,#f0cf66 92%,#fdf3c8 100%)"></div><div style="left:111.80px;top:568.65px;width:10.50px;height:1.00px;background:#e2c05a"></div><span class="t" style="left:126.80px;top:559.70px;font-size:10.2px;color:#000;transform:scaleX(0.8400);">MAIW MCAI de Havilland</span><div style="left:106.20px;top:575.59px;width:5.60px;height:1.00px;background:repeating-linear-gradient(to left,#9a9a9a 0 1px,transparent 1px 2px)"></div><svg style="left:98.20px;top:571.59px" width="6" height="9" viewBox="0 0 6 9"><path d="M0.9 0.9 L5 4.5 L0.9 8.1" fill="none" stroke="#a0a0a0" stroke-width="1.5"/></svg><div style="left:111.80px;top:569.69px;width:10.50px;height:11.90px;background:linear-gradient(to right,#f2d470 0,#fce79a 15%,#fbe08a 70%,#f0cf66 92%,#fdf3c8 100%)"></div><div style="left:111.80px;top:581.59px;width:10.50px;height:1.00px;background:#e2c05a"></div><span class="t" style="left:126.80px;top:572.70px;font-size:10.2px;color:#000;transform:scaleX(0.8400);">MAIW MCAI Pilatus PC</span><div style="left:106.20px;top:588.53px;width:5.60px;height:1.00px;background:repeating-linear-gradient(to left,#9a9a9a 0 1px,transparent 1px 2px)"></div><svg style="left:98.20px;top:584.53px" width="6" height="9" viewBox="0 0 6 9"><path d="M0.9 0.9 L5 4.5 L0.9 8.1" fill="none" stroke="#a0a0a0" stroke-width="1.5"/></svg><div style="left:111.80px;top:582.63px;width:10.50px;height:11.90px;background:linear-gradient(to right,#f2d470 0,#fce79a 15%,#fbe08a 70%,#f0cf66 92%,#fdf3c8 100%)"></div><div style="left:111.80px;top:594.53px;width:10.50px;height:1.00px;background:#e2c05a"></div><span class="t" style="left:126.80px;top:585.70px;font-size:10.2px;color:#000;transform:scaleX(0.8400);">MAIW MGAI Short Tucano</span><div style="left:106.20px;top:601.48px;width:5.60px;height:1.00px;background:repeating-linear-gradient(to left,#9a9a9a 0 1px,transparent 1px 2px)"></div><svg style="left:98.20px;top:597.48px" width="6" height="9" viewBox="0 0 6 9"><path d="M0.9 0.9 L5 4.5 L0.9 8.1" fill="none" stroke="#a0a0a0" stroke-width="1.5"/></svg><div style="left:111.80px;top:595.58px;width:10.50px;height:11.90px;background:linear-gradient(to right,#f2d470 0,#fce79a 15%,#fbe08a 70%,#f0cf66 92%,#fdf3c8 100%)"></div><div style="left:111.80px;top:607.48px;width:10.50px;height:1.00px;background:#e2c05a"></div><span class="t" style="left:126.80px;top:598.70px;font-size:10.2px;color:#000;transform:scaleX(0.8400);">MAIW MGAI SIAI-Marchetti</span><div style="left:106.20px;top:614.42px;width:5.60px;height:1.00px;background:repeating-linear-gradient(to left,#9a9a9a 0 1px,transparent 1px 2px)"></div><svg style="left:98.20px;top:610.42px" width="6" height="9" viewBox="0 0 6 9"><path d="M0.9 0.9 L5 4.5 L0.9 8.1" fill="none" stroke="#a0a0a0" stroke-width="1.5"/></svg><div style="left:111.80px;top:608.52px;width:10.50px;height:11.90px;background:linear-gradient(to right,#f2d470 0,#fce79a 15%,#fbe08a 70%,#f0cf66 92%,#fdf3c8 100%)"></div><div style="left:111.80px;top:620.42px;width:10.50px;height:1.00px;background:#e2c05a"></div><span class="t" style="left:126.80px;top:611.70px;font-size:10.2px;color:#000;transform:scaleX(0.8400);">MAIW MKAI Aerospatiale</span><div style="left:106.20px;top:627.36px;width:5.60px;height:1.00px;background:repeating-linear-gradient(to left,#9a9a9a 0 1px,transparent 1px 2px)"></div><svg style="left:98.20px;top:623.36px" width="6" height="9" viewBox="0 0 6 9"><path d="M0.9 0.9 L5 4.5 L0.9 8.1" fill="none" stroke="#a0a0a0" stroke-width="1.5"/></svg><div style="left:111.80px;top:621.46px;width:10.50px;height:11.90px;background:linear-gradient(to right,#f2d470 0,#fce79a 15%,#fbe08a 70%,#f0cf66 92%,#fdf3c8 100%)"></div><div style="left:111.80px;top:633.36px;width:10.50px;height:1.00px;background:#e2c05a"></div><span class="t" style="left:126.80px;top:623.70px;font-size:10.2px;color:#000;transform:scaleX(0.8400);">MAIW MKAI Breguet A</span><div style="left:106.20px;top:640.31px;width:5.60px;height:1.00px;background:repeating-linear-gradient(to left,#9a9a9a 0 1px,transparent 1px 2px)"></div><svg style="left:98.20px;top:636.31px" width="6" height="9" viewBox="0 0 6 9"><path d="M0.9 0.9 L5 4.5 L0.9 8.1" fill="none" stroke="#a0a0a0" stroke-width="1.5"/></svg><div style="left:111.80px;top:634.41px;width:10.50px;height:11.90px;background:linear-gradient(to right,#f2d470 0,#fce79a 15%,#fbe08a 70%,#f0cf66 92%,#fdf3c8 100%)"></div><div style="left:111.80px;top:646.31px;width:10.50px;height:1.00px;background:#e2c05a"></div><span class="t" style="left:126.80px;top:636.70px;font-size:10.2px;color:#000;transform:scaleX(0.8400);">MAIW MKAI Breguet A</span><div style="left:106.20px;top:653.25px;width:5.60px;height:1.00px;background:repeating-linear-gradient(to left,#9a9a9a 0 1px,transparent 1px 2px)"></div><svg style="left:98.20px;top:649.25px" width="6" height="9" viewBox="0 0 6 9"><path d="M0.9 0.9 L5 4.5 L0.9 8.1" fill="none" stroke="#a0a0a0" stroke-width="1.5"/></svg><div style="left:111.80px;top:647.35px;width:10.50px;height:11.90px;background:linear-gradient(to right,#f2d470 0,#fce79a 15%,#fbe08a 70%,#f0cf66 92%,#fdf3c8 100%)"></div><div style="left:111.80px;top:659.25px;width:10.50px;height:1.00px;background:#e2c05a"></div><span class="t" style="left:126.80px;top:649.70px;font-size:10.2px;color:#000;transform:scaleX(0.8400);">MAIW MKAI Breguet A</span><div style="left:106.20px;top:666.19px;width:5.60px;height:1.00px;background:repeating-linear-gradient(to left,#9a9a9a 0 1px,transparent 1px 2px)"></div><svg style="left:98.20px;top:662.19px" width="6" height="9" viewBox="0 0 6 9"><path d="M0.9 0.9 L5 4.5 L0.9 8.1" fill="none" stroke="#a0a0a0" stroke-width="1.5"/></svg><div style="left:111.80px;top:660.29px;width:10.50px;height:11.90px;background:linear-gradient(to right,#f2d470 0,#fce79a 15%,#fbe08a 70%,#f0cf66 92%,#fdf3c8 100%)"></div><div style="left:111.80px;top:672.19px;width:10.50px;height:1.00px;background:#e2c05a"></div><span class="t" style="left:126.80px;top:662.70px;font-size:10.2px;color:#000;transform:scaleX(0.8400);">MAIW MKAI Breguet A</span><div style="left:106.20px;top:679.14px;width:5.60px;height:1.00px;background:repeating-linear-gradient(to left,#9a9a9a 0 1px,transparent 1px 2px)"></div><svg style="left:98.20px;top:675.14px" width="6" height="9" viewBox="0 0 6 9"><path d="M0.9 0.9 L5 4.5 L0.9 8.1" fill="none" stroke="#a0a0a0" stroke-width="1.5"/></svg><div style="left:111.80px;top:673.24px;width:10.50px;height:11.90px;background:linear-gradient(to right,#f2d470 0,#fce79a 15%,#fbe08a 70%,#f0cf66 92%,#fdf3c8 100%)"></div><div style="left:111.80px;top:685.14px;width:10.50px;height:1.00px;background:#e2c05a"></div><span class="t" style="left:126.80px;top:675.70px;font-size:10.2px;color:#000;transform:scaleX(0.8400);">MAIW MKAI Breguet A</span></div><div style="left:213.60px;top:100.30px;width:13.70px;height:684.70px;background:#f0f0f0"></div><svg style="left:216.30px;top:105.00px" width="7" height="5" viewBox="0 0 7 5"><path d="M0.7 4.3 L3.5 1 L6.3 4.3" fill="none" stroke="#606060" stroke-width="1.3"/></svg><svg style="left:216.30px;top:774.00px" width="7" height="5" viewBox="0 0 7 5"><path d="M0.7 0.7 L3.5 4 L6.3 0.7" fill="none" stroke="#606060" stroke-width="1.3"/></svg><div style="left:215.00px;top:223.70px;width:11.30px;height:111.30px;background:#cdcdcd"></div><div style="left:1.00px;top:785.00px;width:213.20px;height:13.00px;background:#f0f0f0"></div><div style="left:19.00px;top:786.00px;width:106.00px;height:11.00px;background:#cdcdcd"></div><svg style="left:7.00px;top:788.00px" width="5" height="7" viewBox="0 0 5 7"><path d="M4.3 0.7 L1 3.5 L4.3 6.3" fill="none" stroke="#606060" stroke-width="1.3"/></svg><svg style="left:204.00px;top:788.00px" width="5" height="7" viewBox="0 0 5 7"><path d="M0.7 0.7 L4 3.5 L0.7 6.3" fill="none" stroke="#606060" stroke-width="1.3"/></svg><div style="left:214.20px;top:785.00px;width:13.10px;height:13.00px;background:#f0f0f0"></div><div style="left:227.70px;top:48.80px;width:3.30px;height:751.20px;background:#f8f8f8"></div><div style="left:233.30px;top:48.30px;width:788.90px;height:346.20px;background:#1e1e1e"></div><div style="left:235.20px;top:50.30px;width:787.00px;height:342.50px;overflow:hidden;background:#fff"><div style="left:32.00px;top:0.00px;width:1.00px;height:16.00px;background:#e3e3e3"></div><div style="left:57.20px;top:0.00px;width:1.00px;height:16.00px;background:#e3e3e3"></div><div style="left:113.30px;top:0.00px;width:1.00px;height:16.00px;background:#e3e3e3"></div><div style="left:261.00px;top:0.00px;width:1.00px;height:16.00px;background:#e3e3e3"></div><div style="left:310.00px;top:0.00px;width:1.00px;height:16.00px;background:#e3e3e3"></div><div style="left:389.30px;top:0.00px;width:1.00px;height:16.00px;background:#e3e3e3"></div><div style="left:426.80px;top:0.00px;width:1.00px;height:16.00px;background:#e3e3e3"></div><div style="left:514.30px;top:0.00px;width:1.00px;height:16.00px;background:#e3e3e3"></div><div style="left:610.30px;top:0.00px;width:1.00px;height:16.00px;background:#e3e3e3"></div><div style="left:709.80px;top:0.00px;width:1.00px;height:16.00px;background:#e3e3e3"></div><div style="left:775.20px;top:0.00px;width:1.00px;height:16.00px;background:#e3e3e3"></div><div style="left:32.00px;top:0.00px;width:25.20px;height:16.00px;background:#cce4f7"></div><div style="left:0.00px;top:15.20px;width:787.00px;height:1.00px;background:#b9b9b9"></div><span class="t" style="left:38.80px;top:4.70px;font-size:10.2px;color:#1a1a1a;transform:scaleX(0.8560);">Sel.</span><span class="t" style="left:63.60px;top:4.70px;font-size:10.2px;color:#1a1a1a;transform:scaleX(0.8560);">[fltsim.x]</span><span class="t" style="left:118.60px;top:4.70px;font-size:10.2px;color:#1a1a1a;transform:scaleX(0.8560);">title</span><span class="t" style="left:266.70px;top:4.70px;font-size:10.2px;color:#1a1a1a;transform:scaleX(0.8560);">model</span><span class="t" style="left:315.60px;top:4.70px;font-size:10.2px;color:#1a1a1a;transform:scaleX(0.8560);">texture</span><span class="t" style="left:395.10px;top:4.70px;font-size:10.2px;color:#1a1a1a;transform:scaleX(0.8560);">sim</span><span class="t" style="left:433.10px;top:4.70px;font-size:10.2px;color:#1a1a1a;transform:scaleX(0.8560);">prop_anim_ratio</span><span class="t" style="left:519.60px;top:4.70px;font-size:10.2px;color:#1a1a1a;transform:scaleX(0.8560);">atc_parking_types</span><span class="t" style="left:616.10px;top:4.70px;font-size:10.2px;color:#1a1a1a;transform:scaleX(0.8560);">atc_parking_codes</span><span class="t" style="left:715.30px;top:4.70px;font-size:10.2px;color:#1a1a1a;transform:scaleX(0.8560);">atc_model</span><span class="t" style="left:781.60px;top:4.70px;font-size:10.2px;color:#1a1a1a;transform:scaleX(0.8560);">atc_flight_number</span><svg style="left:103.60px;top:6.90px" width="7" height="4" viewBox="0 0 7 4"><path d="M0 4 L3.5 0 L7 4 Z" fill="#b5b5b5"/></svg><div style="left:0.00px;top:319.50px;width:787.00px;height:9.70px;background:#ababab"></div><div style="left:0.00px;top:16.00px;width:32.00px;height:17.80px;background:#b3d7f3"></div><div style="left:32.50px;top:16.00px;width:754.50px;height:17.80px;background:#0078d7"></div><svg style="left:4.60px;top:22.90px" width="5" height="7" viewBox="0 0 5 7"><path d="M0 0 L5 3.5 L0 7 Z" fill="#3c3c3c"/></svg><div style="left:32.00px;top:16.30px;width:1.00px;height:17.80px;background:#b8b8b8"></div><div style="left:57.20px;top:16.30px;width:1.00px;height:17.80px;background:#4aa3e8"></div><div style="left:113.30px;top:16.30px;width:1.00px;height:17.80px;background:#4aa3e8"></div><div style="left:261.00px;top:16.30px;width:1.00px;height:17.80px;background:#4aa3e8"></div><div style="left:310.00px;top:16.30px;width:1.00px;height:17.80px;background:#4aa3e8"></div><div style="left:389.30px;top:16.30px;width:1.00px;height:17.80px;background:#4aa3e8"></div><div style="left:426.80px;top:16.30px;width:1.00px;height:17.80px;background:#4aa3e8"></div><div style="left:514.30px;top:16.30px;width:1.00px;height:17.80px;background:#4aa3e8"></div><div style="left:610.30px;top:16.30px;width:1.00px;height:17.80px;background:#4aa3e8"></div><div style="left:709.80px;top:16.30px;width:1.00px;height:17.80px;background:#4aa3e8"></div><div style="left:775.20px;top:16.30px;width:1.00px;height:17.80px;background:#4aa3e8"></div><div style="left:39.60px;top:20.50px;width:9.80px;height:9.80px;background:#fff;border:1px solid #1e3f66;box-sizing:border-box"></div><span class="t" style="left:60.40px;top:21.70px;font-size:10.2px;color:#fff;transform:scaleX(0.8560);">0</span><span class="t" style="left:116.70px;top:21.70px;font-size:10.2px;color:#fff;transform:scaleX(0.8560);">MAIW_EAI_E3A_NATO_LX-N90442</span><span class="t" style="left:265.00px;top:21.70px;font-size:10.2px;color:#fff;transform:scaleX(0.8560);">E3A</span><span class="t" style="left:314.00px;top:21.70px;font-size:10.2px;color:#fff;transform:scaleX(0.8560);">NATO_LX-N90442</span><span class="t" style="left:393.00px;top:21.70px;font-size:10.2px;color:#fff;transform:scaleX(0.8560);">e3f</span><span class="t" style="left:518.00px;top:21.70px;font-size:10.2px;color:#fff;transform:scaleX(0.8560);">MIL_CARGO</span><span class="t" style="left:614.20px;top:21.70px;font-size:10.2px;color:#fff;transform:scaleX(0.8560);">NAEW</span><div style="left:0.00px;top:51.40px;width:32.00px;height:1.00px;background:#dcdcdc"></div><div style="left:32.00px;top:51.40px;width:755.00px;height:1.00px;background:#bcbcbc"></div><div style="left:32.00px;top:34.10px;width:1.00px;height:17.80px;background:#b8b8b8"></div><div style="left:57.20px;top:34.10px;width:1.00px;height:17.80px;background:#b8b8b8"></div><div style="left:113.30px;top:34.10px;width:1.00px;height:17.80px;background:#b8b8b8"></div><div style="left:261.00px;top:34.10px;width:1.00px;height:17.80px;background:#b8b8b8"></div><div style="left:310.00px;top:34.10px;width:1.00px;height:17.80px;background:#b8b8b8"></div><div style="left:389.30px;top:34.10px;width:1.00px;height:17.80px;background:#b8b8b8"></div><div style="left:426.80px;top:34.10px;width:1.00px;height:17.80px;background:#b8b8b8"></div><div style="left:514.30px;top:34.10px;width:1.00px;height:17.80px;background:#b8b8b8"></div><div style="left:610.30px;top:34.10px;width:1.00px;height:17.80px;background:#b8b8b8"></div><div style="left:709.80px;top:34.10px;width:1.00px;height:17.80px;background:#b8b8b8"></div><div style="left:775.20px;top:34.10px;width:1.00px;height:17.80px;background:#b8b8b8"></div><div style="left:39.60px;top:38.30px;width:9.80px;height:9.80px;background:#fff;border:1.2px solid #333;box-sizing:border-box"></div><span class="t" style="left:60.40px;top:39.70px;font-size:10.2px;color:#222;transform:scaleX(0.8560);">1</span><span class="t" style="left:116.70px;top:39.70px;font-size:10.2px;color:#222;transform:scaleX(0.8560);">MAIW_EAI_E3A_NATO_LX-N90443</span><span class="t" style="left:265.00px;top:39.70px;font-size:10.2px;color:#222;transform:scaleX(0.8560);">E3A</span><span class="t" style="left:314.00px;top:39.70px;font-size:10.2px;color:#222;transform:scaleX(0.8560);">NATO_LX-N90443</span><span class="t" style="left:393.00px;top:39.70px;font-size:10.2px;color:#222;transform:scaleX(0.8560);">e3f</span><span class="t" style="left:518.00px;top:39.70px;font-size:10.2px;color:#222;transform:scaleX(0.8560);">MIL_CARGO</span><span class="t" style="left:614.20px;top:39.70px;font-size:10.2px;color:#222;transform:scaleX(0.8560);">NAEW</span><div style="left:0.00px;top:69.20px;width:32.00px;height:1.00px;background:#dcdcdc"></div><div style="left:32.00px;top:69.20px;width:755.00px;height:1.00px;background:#bcbcbc"></div><div style="left:32.00px;top:51.90px;width:1.00px;height:17.80px;background:#b8b8b8"></div><div style="left:57.20px;top:51.90px;width:1.00px;height:17.80px;background:#b8b8b8"></div><div style="left:113.30px;top:51.90px;width:1.00px;height:17.80px;background:#b8b8b8"></div><div style="left:261.00px;top:51.90px;width:1.00px;height:17.80px;background:#b8b8b8"></div><div style="left:310.00px;top:51.90px;width:1.00px;height:17.80px;background:#b8b8b8"></div><div style="left:389.30px;top:51.90px;width:1.00px;height:17.80px;background:#b8b8b8"></div><div style="left:426.80px;top:51.90px;width:1.00px;height:17.80px;background:#b8b8b8"></div><div style="left:514.30px;top:51.90px;width:1.00px;height:17.80px;background:#b8b8b8"></div><div style="left:610.30px;top:51.90px;width:1.00px;height:17.80px;background:#b8b8b8"></div><div style="left:709.80px;top:51.90px;width:1.00px;height:17.80px;background:#b8b8b8"></div><div style="left:775.20px;top:51.90px;width:1.00px;height:17.80px;background:#b8b8b8"></div><div style="left:39.60px;top:56.10px;width:9.80px;height:9.80px;background:#fff;border:1.2px solid #333;box-sizing:border-box"></div><span class="t" style="left:60.40px;top:57.70px;font-size:10.2px;color:#222;transform:scaleX(0.8560);">2</span><span class="t" style="left:116.70px;top:57.70px;font-size:10.2px;color:#222;transform:scaleX(0.8560);">MAIW_EAI_E3A_NATO_LX-N90444</span><span class="t" style="left:265.00px;top:57.70px;font-size:10.2px;color:#222;transform:scaleX(0.8560);">E3A</span><span class="t" style="left:314.00px;top:57.70px;font-size:10.2px;color:#222;transform:scaleX(0.8560);">NATO_LX-N90444</span><span class="t" style="left:393.00px;top:57.70px;font-size:10.2px;color:#222;transform:scaleX(0.8560);">e3f</span><span class="t" style="left:518.00px;top:57.70px;font-size:10.2px;color:#222;transform:scaleX(0.8560);">MIL_CARGO</span><span class="t" style="left:614.20px;top:57.70px;font-size:10.2px;color:#222;transform:scaleX(0.8560);">NAEW</span><div style="left:0.00px;top:87.00px;width:32.00px;height:1.00px;background:#dcdcdc"></div><div style="left:32.00px;top:87.00px;width:755.00px;height:1.00px;background:#bcbcbc"></div><div style="left:32.00px;top:69.70px;width:1.00px;height:17.80px;background:#b8b8b8"></div><div style="left:57.20px;top:69.70px;width:1.00px;height:17.80px;background:#b8b8b8"></div><div style="left:113.30px;top:69.70px;width:1.00px;height:17.80px;background:#b8b8b8"></div><div style="left:261.00px;top:69.70px;width:1.00px;height:17.80px;background:#b8b8b8"></div><div style="left:310.00px;top:69.70px;width:1.00px;height:17.80px;background:#b8b8b8"></div><div style="left:389.30px;top:69.70px;width:1.00px;height:17.80px;background:#b8b8b8"></div><div style="left:426.80px;top:69.70px;width:1.00px;height:17.80px;background:#b8b8b8"></div><div style="left:514.30px;top:69.70px;width:1.00px;height:17.80px;background:#b8b8b8"></div><div style="left:610.30px;top:69.70px;width:1.00px;height:17.80px;background:#b8b8b8"></div><div style="left:709.80px;top:69.70px;width:1.00px;height:17.80px;background:#b8b8b8"></div><div style="left:775.20px;top:69.70px;width:1.00px;height:17.80px;background:#b8b8b8"></div><div style="left:39.60px;top:73.90px;width:9.80px;height:9.80px;background:#fff;border:1.2px solid #333;box-sizing:border-box"></div><span class="t" style="left:60.40px;top:75.70px;font-size:10.2px;color:#222;transform:scaleX(0.8560);">3</span><span class="t" style="left:116.70px;top:75.70px;font-size:10.2px;color:#222;transform:scaleX(0.8560);">MAIW_EAI_E3A_NATO_LX-N90445</span><span class="t" style="left:265.00px;top:75.70px;font-size:10.2px;color:#222;transform:scaleX(0.8560);">E3A</span><span class="t" style="left:314.00px;top:75.70px;font-size:10.2px;color:#222;transform:scaleX(0.8560);">NATO_LX-N90445</span><span class="t" style="left:393.00px;top:75.70px;font-size:10.2px;color:#222;transform:scaleX(0.8560);">e3f</span><span class="t" style="left:518.00px;top:75.70px;font-size:10.2px;color:#222;transform:scaleX(0.8560);">MIL_CARGO</span><span class="t" style="left:614.20px;top:75.70px;font-size:10.2px;color:#222;transform:scaleX(0.8560);">NAEW</span><div style="left:0.00px;top:104.80px;width:32.00px;height:1.00px;background:#dcdcdc"></div><div style="left:32.00px;top:104.80px;width:755.00px;height:1.00px;background:#bcbcbc"></div><div style="left:32.00px;top:87.50px;width:1.00px;height:17.80px;background:#b8b8b8"></div><div style="left:57.20px;top:87.50px;width:1.00px;height:17.80px;background:#b8b8b8"></div><div style="left:113.30px;top:87.50px;width:1.00px;height:17.80px;background:#b8b8b8"></div><div style="left:261.00px;top:87.50px;width:1.00px;height:17.80px;background:#b8b8b8"></div><div style="left:310.00px;top:87.50px;width:1.00px;height:17.80px;background:#b8b8b8"></div><div style="left:389.30px;top:87.50px;width:1.00px;height:17.80px;background:#b8b8b8"></div><div style="left:426.80px;top:87.50px;width:1.00px;height:17.80px;background:#b8b8b8"></div><div style="left:514.30px;top:87.50px;width:1.00px;height:17.80px;background:#b8b8b8"></div><div style="left:610.30px;top:87.50px;width:1.00px;height:17.80px;background:#b8b8b8"></div><div style="left:709.80px;top:87.50px;width:1.00px;height:17.80px;background:#b8b8b8"></div><div style="left:775.20px;top:87.50px;width:1.00px;height:17.80px;background:#b8b8b8"></div><div style="left:39.60px;top:91.70px;width:9.80px;height:9.80px;background:#fff;border:1.2px solid #333;box-sizing:border-box"></div><span class="t" style="left:60.40px;top:92.70px;font-size:10.2px;color:#222;transform:scaleX(0.8560);">4</span><span class="t" style="left:116.70px;top:92.70px;font-size:10.2px;color:#222;transform:scaleX(0.8560);">MAIW_EAI_E3A_NATO_LX-N90446</span><span class="t" style="left:265.00px;top:92.70px;font-size:10.2px;color:#222;transform:scaleX(0.8560);">E3A</span><span class="t" style="left:314.00px;top:92.70px;font-size:10.2px;color:#222;transform:scaleX(0.8560);">NATO_LX-N90446</span><span class="t" style="left:393.00px;top:92.70px;font-size:10.2px;color:#222;transform:scaleX(0.8560);">e3f</span><span class="t" style="left:518.00px;top:92.70px;font-size:10.2px;color:#222;transform:scaleX(0.8560);">MIL_CARGO</span><span class="t" style="left:614.20px;top:92.70px;font-size:10.2px;color:#222;transform:scaleX(0.8560);">NAEW</span><div style="left:0.00px;top:122.60px;width:32.00px;height:1.00px;background:#dcdcdc"></div><div style="left:32.00px;top:122.60px;width:755.00px;height:1.00px;background:#bcbcbc"></div><div style="left:32.00px;top:105.30px;width:1.00px;height:17.80px;background:#b8b8b8"></div><div style="left:57.20px;top:105.30px;width:1.00px;height:17.80px;background:#b8b8b8"></div><div style="left:113.30px;top:105.30px;width:1.00px;height:17.80px;background:#b8b8b8"></div><div style="left:261.00px;top:105.30px;width:1.00px;height:17.80px;background:#b8b8b8"></div><div style="left:310.00px;top:105.30px;width:1.00px;height:17.80px;background:#b8b8b8"></div><div style="left:389.30px;top:105.30px;width:1.00px;height:17.80px;background:#b8b8b8"></div><div style="left:426.80px;top:105.30px;width:1.00px;height:17.80px;background:#b8b8b8"></div><div style="left:514.30px;top:105.30px;width:1.00px;height:17.80px;background:#b8b8b8"></div><div style="left:610.30px;top:105.30px;width:1.00px;height:17.80px;background:#b8b8b8"></div><div style="left:709.80px;top:105.30px;width:1.00px;height:17.80px;background:#b8b8b8"></div><div style="left:775.20px;top:105.30px;width:1.00px;height:17.80px;background:#b8b8b8"></div><div style="left:39.60px;top:109.50px;width:9.80px;height:9.80px;background:#fff;border:1.2px solid #333;box-sizing:border-box"></div><span class="t" style="left:60.40px;top:110.70px;font-size:10.2px;color:#222;transform:scaleX(0.8560);">5</span><span class="t" style="left:116.70px;top:110.70px;font-size:10.2px;color:#222;transform:scaleX(0.8560);">MAIW_EAI_E3A_NATO_LX-N90447</span><span class="t" style="left:265.00px;top:110.70px;font-size:10.2px;color:#222;transform:scaleX(0.8560);">E3A</span><span class="t" style="left:314.00px;top:110.70px;font-size:10.2px;color:#222;transform:scaleX(0.8560);">NATO_LX-N90447</span><span class="t" style="left:393.00px;top:110.70px;font-size:10.2px;color:#222;transform:scaleX(0.8560);">e3f</span><span class="t" style="left:518.00px;top:110.70px;font-size:10.2px;color:#222;transform:scaleX(0.8560);">MIL_CARGO</span><span class="t" style="left:614.20px;top:110.70px;font-size:10.2px;color:#222;transform:scaleX(0.8560);">NAEW</span><div style="left:0.00px;top:140.40px;width:32.00px;height:1.00px;background:#dcdcdc"></div><div style="left:32.00px;top:140.40px;width:755.00px;height:1.00px;background:#bcbcbc"></div><div style="left:32.00px;top:123.10px;width:1.00px;height:17.80px;background:#b8b8b8"></div><div style="left:57.20px;top:123.10px;width:1.00px;height:17.80px;background:#b8b8b8"></div><div style="left:113.30px;top:123.10px;width:1.00px;height:17.80px;background:#b8b8b8"></div><div style="left:261.00px;top:123.10px;width:1.00px;height:17.80px;background:#b8b8b8"></div><div style="left:310.00px;top:123.10px;width:1.00px;height:17.80px;background:#b8b8b8"></div><div style="left:389.30px;top:123.10px;width:1.00px;height:17.80px;background:#b8b8b8"></div><div style="left:426.80px;top:123.10px;width:1.00px;height:17.80px;background:#b8b8b8"></div><div style="left:514.30px;top:123.10px;width:1.00px;height:17.80px;background:#b8b8b8"></div><div style="left:610.30px;top:123.10px;width:1.00px;height:17.80px;background:#b8b8b8"></div><div style="left:709.80px;top:123.10px;width:1.00px;height:17.80px;background:#b8b8b8"></div><div style="left:775.20px;top:123.10px;width:1.00px;height:17.80px;background:#b8b8b8"></div><div style="left:39.60px;top:127.30px;width:9.80px;height:9.80px;background:#fff;border:1.2px solid #333;box-sizing:border-box"></div><span class="t" style="left:60.40px;top:128.70px;font-size:10.2px;color:#222;transform:scaleX(0.8560);">6</span><span class="t" style="left:116.70px;top:128.70px;font-size:10.2px;color:#222;transform:scaleX(0.8560);">MAIW_EAI_E3A_NATO_LX-N90448</span><span class="t" style="left:265.00px;top:128.70px;font-size:10.2px;color:#222;transform:scaleX(0.8560);">E3A</span><span class="t" style="left:314.00px;top:128.70px;font-size:10.2px;color:#222;transform:scaleX(0.8560);">NATO_LX-N90448</span><span class="t" style="left:393.00px;top:128.70px;font-size:10.2px;color:#222;transform:scaleX(0.8560);">e3f</span><span class="t" style="left:518.00px;top:128.70px;font-size:10.2px;color:#222;transform:scaleX(0.8560);">MIL_CARGO</span><span class="t" style="left:614.20px;top:128.70px;font-size:10.2px;color:#222;transform:scaleX(0.8560);">NAEW</span><div style="left:0.00px;top:158.20px;width:32.00px;height:1.00px;background:#dcdcdc"></div><div style="left:32.00px;top:158.20px;width:755.00px;height:1.00px;background:#bcbcbc"></div><div style="left:32.00px;top:140.90px;width:1.00px;height:17.80px;background:#b8b8b8"></div><div style="left:57.20px;top:140.90px;width:1.00px;height:17.80px;background:#b8b8b8"></div><div style="left:113.30px;top:140.90px;width:1.00px;height:17.80px;background:#b8b8b8"></div><div style="left:261.00px;top:140.90px;width:1.00px;height:17.80px;background:#b8b8b8"></div><div style="left:310.00px;top:140.90px;width:1.00px;height:17.80px;background:#b8b8b8"></div><div style="left:389.30px;top:140.90px;width:1.00px;height:17.80px;background:#b8b8b8"></div><div style="left:426.80px;top:140.90px;width:1.00px;height:17.80px;background:#b8b8b8"></div><div style="left:514.30px;top:140.90px;width:1.00px;height:17.80px;background:#b8b8b8"></div><div style="left:610.30px;top:140.90px;width:1.00px;height:17.80px;background:#b8b8b8"></div><div style="left:709.80px;top:140.90px;width:1.00px;height:17.80px;background:#b8b8b8"></div><div style="left:775.20px;top:140.90px;width:1.00px;height:17.80px;background:#b8b8b8"></div><div style="left:39.60px;top:145.10px;width:9.80px;height:9.80px;background:#fff;border:1.2px solid #333;box-sizing:border-box"></div><span class="t" style="left:60.40px;top:146.70px;font-size:10.2px;color:#222;transform:scaleX(0.8560);">7</span><span class="t" style="left:116.70px;top:146.70px;font-size:10.2px;color:#222;transform:scaleX(0.8560);">MAIW_EAI_E3A_NATO_LX-N90449</span><span class="t" style="left:265.00px;top:146.70px;font-size:10.2px;color:#222;transform:scaleX(0.8560);">E3A</span><span class="t" style="left:314.00px;top:146.70px;font-size:10.2px;color:#222;transform:scaleX(0.8560);">NATO_LX-N90449</span><span class="t" style="left:393.00px;top:146.70px;font-size:10.2px;color:#222;transform:scaleX(0.8560);">e3f</span><span class="t" style="left:518.00px;top:146.70px;font-size:10.2px;color:#222;transform:scaleX(0.8560);">MIL_CARGO</span><span class="t" style="left:614.20px;top:146.70px;font-size:10.2px;color:#222;transform:scaleX(0.8560);">NAEW</span><div style="left:0.00px;top:176.00px;width:32.00px;height:1.00px;background:#dcdcdc"></div><div style="left:32.00px;top:176.00px;width:755.00px;height:1.00px;background:#bcbcbc"></div><div style="left:32.00px;top:158.70px;width:1.00px;height:17.80px;background:#b8b8b8"></div><div style="left:57.20px;top:158.70px;width:1.00px;height:17.80px;background:#b8b8b8"></div><div style="left:113.30px;top:158.70px;width:1.00px;height:17.80px;background:#b8b8b8"></div><div style="left:261.00px;top:158.70px;width:1.00px;height:17.80px;background:#b8b8b8"></div><div style="left:310.00px;top:158.70px;width:1.00px;height:17.80px;background:#b8b8b8"></div><div style="left:389.30px;top:158.70px;width:1.00px;height:17.80px;background:#b8b8b8"></div><div style="left:426.80px;top:158.70px;width:1.00px;height:17.80px;background:#b8b8b8"></div><div style="left:514.30px;top:158.70px;width:1.00px;height:17.80px;background:#b8b8b8"></div><div style="left:610.30px;top:158.70px;width:1.00px;height:17.80px;background:#b8b8b8"></div><div style="left:709.80px;top:158.70px;width:1.00px;height:17.80px;background:#b8b8b8"></div><div style="left:775.20px;top:158.70px;width:1.00px;height:17.80px;background:#b8b8b8"></div><div style="left:39.60px;top:162.90px;width:9.80px;height:9.80px;background:#fff;border:1.2px solid #333;box-sizing:border-box"></div><span class="t" style="left:60.40px;top:164.70px;font-size:10.2px;color:#222;transform:scaleX(0.8560);">8</span><span class="t" style="left:116.70px;top:164.70px;font-size:10.2px;color:#222;transform:scaleX(0.8560);">MAIW_EAI_E3A_NATO_LX-N90450</span><span class="t" style="left:265.00px;top:164.70px;font-size:10.2px;color:#222;transform:scaleX(0.8560);">E3A</span><span class="t" style="left:314.00px;top:164.70px;font-size:10.2px;color:#222;transform:scaleX(0.8560);">NATO_LX-N90450</span><span class="t" style="left:393.00px;top:164.70px;font-size:10.2px;color:#222;transform:scaleX(0.8560);">e3f</span><span class="t" style="left:518.00px;top:164.70px;font-size:10.2px;color:#222;transform:scaleX(0.8560);">MIL_CARGO</span><span class="t" style="left:614.20px;top:164.70px;font-size:10.2px;color:#222;transform:scaleX(0.8560);">NAEW</span><div style="left:0.00px;top:193.80px;width:32.00px;height:1.00px;background:#dcdcdc"></div><div style="left:32.00px;top:193.80px;width:755.00px;height:1.00px;background:#bcbcbc"></div><div style="left:32.00px;top:176.50px;width:1.00px;height:17.80px;background:#b8b8b8"></div><div style="left:57.20px;top:176.50px;width:1.00px;height:17.80px;background:#b8b8b8"></div><div style="left:113.30px;top:176.50px;width:1.00px;height:17.80px;background:#b8b8b8"></div><div style="left:261.00px;top:176.50px;width:1.00px;height:17.80px;background:#b8b8b8"></div><div style="left:310.00px;top:176.50px;width:1.00px;height:17.80px;background:#b8b8b8"></div><div style="left:389.30px;top:176.50px;width:1.00px;height:17.80px;background:#b8b8b8"></div><div style="left:426.80px;top:176.50px;width:1.00px;height:17.80px;background:#b8b8b8"></div><div style="left:514.30px;top:176.50px;width:1.00px;height:17.80px;background:#b8b8b8"></div><div style="left:610.30px;top:176.50px;width:1.00px;height:17.80px;background:#b8b8b8"></div><div style="left:709.80px;top:176.50px;width:1.00px;height:17.80px;background:#b8b8b8"></div><div style="left:775.20px;top:176.50px;width:1.00px;height:17.80px;background:#b8b8b8"></div><div style="left:39.60px;top:180.70px;width:9.80px;height:9.80px;background:#fff;border:1.2px solid #333;box-sizing:border-box"></div><span class="t" style="left:60.40px;top:181.70px;font-size:10.2px;color:#222;transform:scaleX(0.8560);">9</span><span class="t" style="left:116.70px;top:181.70px;font-size:10.2px;color:#222;transform:scaleX(0.8560);">MAIW_EAI_E3A_NATO_LX-N90451</span><span class="t" style="left:265.00px;top:181.70px;font-size:10.2px;color:#222;transform:scaleX(0.8560);">E3A</span><span class="t" style="left:314.00px;top:181.70px;font-size:10.2px;color:#222;transform:scaleX(0.8560);">NATO_LX-N90451</span><span class="t" style="left:393.00px;top:181.70px;font-size:10.2px;color:#222;transform:scaleX(0.8560);">e3f</span><span class="t" style="left:518.00px;top:181.70px;font-size:10.2px;color:#222;transform:scaleX(0.8560);">MIL_CARGO</span><span class="t" style="left:614.20px;top:181.70px;font-size:10.2px;color:#222;transform:scaleX(0.8560);">NAEW</span><div style="left:0.00px;top:211.60px;width:32.00px;height:1.00px;background:#dcdcdc"></div><div style="left:32.00px;top:211.60px;width:755.00px;height:1.00px;background:#bcbcbc"></div><div style="left:32.00px;top:194.30px;width:1.00px;height:17.80px;background:#b8b8b8"></div><div style="left:57.20px;top:194.30px;width:1.00px;height:17.80px;background:#b8b8b8"></div><div style="left:113.30px;top:194.30px;width:1.00px;height:17.80px;background:#b8b8b8"></div><div style="left:261.00px;top:194.30px;width:1.00px;height:17.80px;background:#b8b8b8"></div><div style="left:310.00px;top:194.30px;width:1.00px;height:17.80px;background:#b8b8b8"></div><div style="left:389.30px;top:194.30px;width:1.00px;height:17.80px;background:#b8b8b8"></div><div style="left:426.80px;top:194.30px;width:1.00px;height:17.80px;background:#b8b8b8"></div><div style="left:514.30px;top:194.30px;width:1.00px;height:17.80px;background:#b8b8b8"></div><div style="left:610.30px;top:194.30px;width:1.00px;height:17.80px;background:#b8b8b8"></div><div style="left:709.80px;top:194.30px;width:1.00px;height:17.80px;background:#b8b8b8"></div><div style="left:775.20px;top:194.30px;width:1.00px;height:17.80px;background:#b8b8b8"></div><div style="left:39.60px;top:198.50px;width:9.80px;height:9.80px;background:#fff;border:1.2px solid #333;box-sizing:border-box"></div><span class="t" style="left:60.40px;top:199.70px;font-size:10.2px;color:#222;transform:scaleX(0.8560);">10</span><span class="t" style="left:116.70px;top:199.70px;font-size:10.2px;color:#222;transform:scaleX(0.8560);">MAIW_EAI_E3A_NATO_LX-N90452</span><span class="t" style="left:265.00px;top:199.70px;font-size:10.2px;color:#222;transform:scaleX(0.8560);">E3A</span><span class="t" style="left:314.00px;top:199.70px;font-size:10.2px;color:#222;transform:scaleX(0.8560);">NATO_LX-N90452</span><span class="t" style="left:393.00px;top:199.70px;font-size:10.2px;color:#222;transform:scaleX(0.8560);">e3f</span><span class="t" style="left:518.00px;top:199.70px;font-size:10.2px;color:#222;transform:scaleX(0.8560);">MIL_CARGO</span><span class="t" style="left:614.20px;top:199.70px;font-size:10.2px;color:#222;transform:scaleX(0.8560);">NAEW</span><div style="left:0.00px;top:229.40px;width:32.00px;height:1.00px;background:#dcdcdc"></div><div style="left:32.00px;top:229.40px;width:755.00px;height:1.00px;background:#bcbcbc"></div><div style="left:32.00px;top:212.10px;width:1.00px;height:17.80px;background:#b8b8b8"></div><div style="left:57.20px;top:212.10px;width:1.00px;height:17.80px;background:#b8b8b8"></div><div style="left:113.30px;top:212.10px;width:1.00px;height:17.80px;background:#b8b8b8"></div><div style="left:261.00px;top:212.10px;width:1.00px;height:17.80px;background:#b8b8b8"></div><div style="left:310.00px;top:212.10px;width:1.00px;height:17.80px;background:#b8b8b8"></div><div style="left:389.30px;top:212.10px;width:1.00px;height:17.80px;background:#b8b8b8"></div><div style="left:426.80px;top:212.10px;width:1.00px;height:17.80px;background:#b8b8b8"></div><div style="left:514.30px;top:212.10px;width:1.00px;height:17.80px;background:#b8b8b8"></div><div style="left:610.30px;top:212.10px;width:1.00px;height:17.80px;background:#b8b8b8"></div><div style="left:709.80px;top:212.10px;width:1.00px;height:17.80px;background:#b8b8b8"></div><div style="left:775.20px;top:212.10px;width:1.00px;height:17.80px;background:#b8b8b8"></div><div style="left:39.60px;top:216.30px;width:9.80px;height:9.80px;background:#fff;border:1.2px solid #333;box-sizing:border-box"></div><span class="t" style="left:60.40px;top:217.70px;font-size:10.2px;color:#222;transform:scaleX(0.8560);">11</span><span class="t" style="left:116.70px;top:217.70px;font-size:10.2px;color:#222;transform:scaleX(0.8560);">MAIW_EAI_E3A_NATO_LX-N90453</span><span class="t" style="left:265.00px;top:217.70px;font-size:10.2px;color:#222;transform:scaleX(0.8560);">E3A</span><span class="t" style="left:314.00px;top:217.70px;font-size:10.2px;color:#222;transform:scaleX(0.8560);">NATO_LX-N90453</span><span class="t" style="left:393.00px;top:217.70px;font-size:10.2px;color:#222;transform:scaleX(0.8560);">e3f</span><span class="t" style="left:518.00px;top:217.70px;font-size:10.2px;color:#222;transform:scaleX(0.8560);">MIL_CARGO</span><span class="t" style="left:614.20px;top:217.70px;font-size:10.2px;color:#222;transform:scaleX(0.8560);">NAEW</span><div style="left:0.00px;top:247.20px;width:32.00px;height:1.00px;background:#dcdcdc"></div><div style="left:32.00px;top:247.20px;width:755.00px;height:1.00px;background:#bcbcbc"></div><div style="left:32.00px;top:229.90px;width:1.00px;height:17.80px;background:#b8b8b8"></div><div style="left:57.20px;top:229.90px;width:1.00px;height:17.80px;background:#b8b8b8"></div><div style="left:113.30px;top:229.90px;width:1.00px;height:17.80px;background:#b8b8b8"></div><div style="left:261.00px;top:229.90px;width:1.00px;height:17.80px;background:#b8b8b8"></div><div style="left:310.00px;top:229.90px;width:1.00px;height:17.80px;background:#b8b8b8"></div><div style="left:389.30px;top:229.90px;width:1.00px;height:17.80px;background:#b8b8b8"></div><div style="left:426.80px;top:229.90px;width:1.00px;height:17.80px;background:#b8b8b8"></div><div style="left:514.30px;top:229.90px;width:1.00px;height:17.80px;background:#b8b8b8"></div><div style="left:610.30px;top:229.90px;width:1.00px;height:17.80px;background:#b8b8b8"></div><div style="left:709.80px;top:229.90px;width:1.00px;height:17.80px;background:#b8b8b8"></div><div style="left:775.20px;top:229.90px;width:1.00px;height:17.80px;background:#b8b8b8"></div><div style="left:39.60px;top:234.10px;width:9.80px;height:9.80px;background:#fff;border:1.2px solid #333;box-sizing:border-box"></div><span class="t" style="left:60.40px;top:235.70px;font-size:10.2px;color:#222;transform:scaleX(0.8560);">12</span><span class="t" style="left:116.70px;top:235.70px;font-size:10.2px;color:#222;transform:scaleX(0.8560);">MAIW_EAI_E3A_NATO_LX-N90454</span><span class="t" style="left:265.00px;top:235.70px;font-size:10.2px;color:#222;transform:scaleX(0.8560);">E3A</span><span class="t" style="left:314.00px;top:235.70px;font-size:10.2px;color:#222;transform:scaleX(0.8560);">NATO_LX-N90454</span><span class="t" style="left:393.00px;top:235.70px;font-size:10.2px;color:#222;transform:scaleX(0.8560);">e3f</span><span class="t" style="left:518.00px;top:235.70px;font-size:10.2px;color:#222;transform:scaleX(0.8560);">MIL_CARGO</span><span class="t" style="left:614.20px;top:235.70px;font-size:10.2px;color:#222;transform:scaleX(0.8560);">NAEW</span><div style="left:0.00px;top:265.00px;width:32.00px;height:1.00px;background:#dcdcdc"></div><div style="left:32.00px;top:265.00px;width:755.00px;height:1.00px;background:#bcbcbc"></div><div style="left:32.00px;top:247.70px;width:1.00px;height:17.80px;background:#b8b8b8"></div><div style="left:57.20px;top:247.70px;width:1.00px;height:17.80px;background:#b8b8b8"></div><div style="left:113.30px;top:247.70px;width:1.00px;height:17.80px;background:#b8b8b8"></div><div style="left:261.00px;top:247.70px;width:1.00px;height:17.80px;background:#b8b8b8"></div><div style="left:310.00px;top:247.70px;width:1.00px;height:17.80px;background:#b8b8b8"></div><div style="left:389.30px;top:247.70px;width:1.00px;height:17.80px;background:#b8b8b8"></div><div style="left:426.80px;top:247.70px;width:1.00px;height:17.80px;background:#b8b8b8"></div><div style="left:514.30px;top:247.70px;width:1.00px;height:17.80px;background:#b8b8b8"></div><div style="left:610.30px;top:247.70px;width:1.00px;height:17.80px;background:#b8b8b8"></div><div style="left:709.80px;top:247.70px;width:1.00px;height:17.80px;background:#b8b8b8"></div><div style="left:775.20px;top:247.70px;width:1.00px;height:17.80px;background:#b8b8b8"></div><div style="left:39.60px;top:251.90px;width:9.80px;height:9.80px;background:#fff;border:1.2px solid #333;box-sizing:border-box"></div><span class="t" style="left:60.40px;top:253.70px;font-size:10.2px;color:#222;transform:scaleX(0.8560);">13</span><span class="t" style="left:116.70px;top:253.70px;font-size:10.2px;color:#222;transform:scaleX(0.8560);">MAIW_EAI_E3A_NATO_LX-N90455</span><span class="t" style="left:265.00px;top:253.70px;font-size:10.2px;color:#222;transform:scaleX(0.8560);">E3A</span><span class="t" style="left:314.00px;top:253.70px;font-size:10.2px;color:#222;transform:scaleX(0.8560);">NATO_LX-N90455</span><span class="t" style="left:393.00px;top:253.70px;font-size:10.2px;color:#222;transform:scaleX(0.8560);">e3f</span><span class="t" style="left:518.00px;top:253.70px;font-size:10.2px;color:#222;transform:scaleX(0.8560);">MIL_CARGO</span><span class="t" style="left:614.20px;top:253.70px;font-size:10.2px;color:#222;transform:scaleX(0.8560);">NAEW</span><div style="left:0.00px;top:282.80px;width:32.00px;height:1.00px;background:#dcdcdc"></div><div style="left:32.00px;top:282.80px;width:755.00px;height:1.00px;background:#bcbcbc"></div><div style="left:32.00px;top:265.50px;width:1.00px;height:17.80px;background:#b8b8b8"></div><div style="left:57.20px;top:265.50px;width:1.00px;height:17.80px;background:#b8b8b8"></div><div style="left:113.30px;top:265.50px;width:1.00px;height:17.80px;background:#b8b8b8"></div><div style="left:261.00px;top:265.50px;width:1.00px;height:17.80px;background:#b8b8b8"></div><div style="left:310.00px;top:265.50px;width:1.00px;height:17.80px;background:#b8b8b8"></div><div style="left:389.30px;top:265.50px;width:1.00px;height:17.80px;background:#b8b8b8"></div><div style="left:426.80px;top:265.50px;width:1.00px;height:17.80px;background:#b8b8b8"></div><div style="left:514.30px;top:265.50px;width:1.00px;height:17.80px;background:#b8b8b8"></div><div style="left:610.30px;top:265.50px;width:1.00px;height:17.80px;background:#b8b8b8"></div><div style="left:709.80px;top:265.50px;width:1.00px;height:17.80px;background:#b8b8b8"></div><div style="left:775.20px;top:265.50px;width:1.00px;height:17.80px;background:#b8b8b8"></div><div style="left:39.60px;top:269.70px;width:9.80px;height:9.80px;background:#fff;border:1.2px solid #333;box-sizing:border-box"></div><span class="t" style="left:60.40px;top:270.70px;font-size:10.2px;color:#222;transform:scaleX(0.8560);">14</span><span class="t" style="left:116.70px;top:270.70px;font-size:10.2px;color:#222;transform:scaleX(0.8560);">MAIW_EAI_E3A_NATO_LX-N90456</span><span class="t" style="left:265.00px;top:270.70px;font-size:10.2px;color:#222;transform:scaleX(0.8560);">E3A</span><span class="t" style="left:314.00px;top:270.70px;font-size:10.2px;color:#222;transform:scaleX(0.8560);">NATO_LX-N90456</span><span class="t" style="left:393.00px;top:270.70px;font-size:10.2px;color:#222;transform:scaleX(0.8560);">e3f</span><span class="t" style="left:518.00px;top:270.70px;font-size:10.2px;color:#222;transform:scaleX(0.8560);">MIL_CARGO</span><span class="t" style="left:614.20px;top:270.70px;font-size:10.2px;color:#222;transform:scaleX(0.8560);">NAEW</span><div style="left:0.00px;top:300.60px;width:32.00px;height:1.00px;background:#dcdcdc"></div><div style="left:32.00px;top:300.60px;width:755.00px;height:1.00px;background:#bcbcbc"></div><div style="left:32.00px;top:283.30px;width:1.00px;height:17.80px;background:#b8b8b8"></div><div style="left:57.20px;top:283.30px;width:1.00px;height:17.80px;background:#b8b8b8"></div><div style="left:113.30px;top:283.30px;width:1.00px;height:17.80px;background:#b8b8b8"></div><div style="left:261.00px;top:283.30px;width:1.00px;height:17.80px;background:#b8b8b8"></div><div style="left:310.00px;top:283.30px;width:1.00px;height:17.80px;background:#b8b8b8"></div><div style="left:389.30px;top:283.30px;width:1.00px;height:17.80px;background:#b8b8b8"></div><div style="left:426.80px;top:283.30px;width:1.00px;height:17.80px;background:#b8b8b8"></div><div style="left:514.30px;top:283.30px;width:1.00px;height:17.80px;background:#b8b8b8"></div><div style="left:610.30px;top:283.30px;width:1.00px;height:17.80px;background:#b8b8b8"></div><div style="left:709.80px;top:283.30px;width:1.00px;height:17.80px;background:#b8b8b8"></div><div style="left:775.20px;top:283.30px;width:1.00px;height:17.80px;background:#b8b8b8"></div><div style="left:39.60px;top:287.50px;width:9.80px;height:9.80px;background:#fff;border:1.2px solid #333;box-sizing:border-box"></div><span class="t" style="left:60.40px;top:288.70px;font-size:10.2px;color:#222;transform:scaleX(0.8560);">15</span><span class="t" style="left:116.70px;top:288.70px;font-size:10.2px;color:#222;transform:scaleX(0.8560);">MAIW_EAI_E3A_NATO_LX-N90458</span><span class="t" style="left:265.00px;top:288.70px;font-size:10.2px;color:#222;transform:scaleX(0.8560);">E3A</span><span class="t" style="left:314.00px;top:288.70px;font-size:10.2px;color:#222;transform:scaleX(0.8560);">NATO_LX-N90458</span><span class="t" style="left:393.00px;top:288.70px;font-size:10.2px;color:#222;transform:scaleX(0.8560);">e3f</span><span class="t" style="left:518.00px;top:288.70px;font-size:10.2px;color:#222;transform:scaleX(0.8560);">MIL_CARGO</span><span class="t" style="left:614.20px;top:288.70px;font-size:10.2px;color:#222;transform:scaleX(0.8560);">NAEW</span><div style="left:0.00px;top:318.40px;width:32.00px;height:1.00px;background:#dcdcdc"></div><div style="left:32.00px;top:318.40px;width:755.00px;height:1.00px;background:#bcbcbc"></div><div style="left:32.00px;top:301.10px;width:1.00px;height:17.80px;background:#b8b8b8"></div><div style="left:57.20px;top:301.10px;width:1.00px;height:17.80px;background:#b8b8b8"></div><div style="left:113.30px;top:301.10px;width:1.00px;height:17.80px;background:#b8b8b8"></div><div style="left:261.00px;top:301.10px;width:1.00px;height:17.80px;background:#b8b8b8"></div><div style="left:310.00px;top:301.10px;width:1.00px;height:17.80px;background:#b8b8b8"></div><div style="left:389.30px;top:301.10px;width:1.00px;height:17.80px;background:#b8b8b8"></div><div style="left:426.80px;top:301.10px;width:1.00px;height:17.80px;background:#b8b8b8"></div><div style="left:514.30px;top:301.10px;width:1.00px;height:17.80px;background:#b8b8b8"></div><div style="left:610.30px;top:301.10px;width:1.00px;height:17.80px;background:#b8b8b8"></div><div style="left:709.80px;top:301.10px;width:1.00px;height:17.80px;background:#b8b8b8"></div><div style="left:775.20px;top:301.10px;width:1.00px;height:17.80px;background:#b8b8b8"></div><div style="left:39.60px;top:305.30px;width:9.80px;height:9.80px;background:#fff;border:1.2px solid #333;box-sizing:border-box"></div><span class="t" style="left:60.40px;top:306.70px;font-size:10.2px;color:#222;transform:scaleX(0.8560);">16</span><span class="t" style="left:116.70px;top:306.70px;font-size:10.2px;color:#222;transform:scaleX(0.8560);">MAIW_EAI_E3A_NATO_LX-N90459</span><span class="t" style="left:265.00px;top:306.70px;font-size:10.2px;color:#222;transform:scaleX(0.8560);">E3A</span><span class="t" style="left:314.00px;top:306.70px;font-size:10.2px;color:#222;transform:scaleX(0.8560);">NATO_LX-N90459</span><span class="t" style="left:393.00px;top:306.70px;font-size:10.2px;color:#222;transform:scaleX(0.8560);">e3f</span><span class="t" style="left:518.00px;top:306.70px;font-size:10.2px;color:#222;transform:scaleX(0.8560);">MIL_CARGO</span><span class="t" style="left:614.20px;top:306.70px;font-size:10.2px;color:#222;transform:scaleX(0.8560);">NAEW</span><div style="left:0.00px;top:329.20px;width:787.00px;height:13.30px;background:#f0f0f0"></div><div style="left:13.50px;top:330.20px;width:287.00px;height:11.30px;background:#cdcdcd"></div><svg style="left:3.30px;top:332.30px" width="5" height="7" viewBox="0 0 5 7"><path d="M4.3 0.7 L1 3.5 L4.3 6.3" fill="none" stroke="#606060" stroke-width="1.3"/></svg><svg style="left:780.30px;top:332.30px" width="5" height="7" viewBox="0 0 5 7"><path d="M0.7 0.7 L4 3.5 L0.7 6.3" fill="none" stroke="#606060" stroke-width="1.3"/></svg></div><div style="left:232.60px;top:394.50px;width:2.00px;height:405.50px;background:#6a6a6a"></div><div style="left:1019.30px;top:414.30px;width:1.00px;height:385.70px;background:#dcdcdc"></div><div style="left:236.00px;top:399.30px;width:38.00px;height:15.00px;background:#e8e8e8;border:1px solid #f2f2f2;border-bottom:none;box-sizing:border-box"></div><span class="t" style="left:240.00px;top:404.00px;font-size:10px;color:#1a1a1a;transform:scaleX(0.8263);">[fltsim.x]</span><div style="left:275.00px;top:399.30px;width:38.10px;height:15.00px;background:#e8e8e8;border:1px solid #f2f2f2;border-bottom:none;box-sizing:border-box"></div><span class="t" style="left:279.70px;top:404.00px;font-size:10px;color:#1a1a1a;transform:scaleX(0.8347);">General</span><div style="left:377.40px;top:399.30px;width:39.60px;height:15.00px;background:#e8e8e8;border:1px solid #f2f2f2;border-bottom:none;box-sizing:border-box"></div><span class="t" style="left:381.50px;top:404.00px;font-size:10px;color:#1a1a1a;transform:scaleX(0.8600);">Textures</span><div style="left:418.00px;top:399.30px;width:68.50px;height:15.00px;background:#e8e8e8;border:1px solid #f2f2f2;border-bottom:none;box-sizing:border-box"></div><span class="t" style="left:425.00px;top:404.00px;font-size:10px;color:#1a1a1a;transform:scaleX(0.8421);">Backups (*.owl)</span><div style="left:313.60px;top:397.30px;width:63.30px;height:17.50px;background:#fdfdfd;border:1px solid #e4e4e4;border-bottom:none;box-sizing:border-box"></div><span class="t" style="left:319.80px;top:402.00px;font-size:10px;color:#1a1a1a;transform:scaleX(0.8543);">Model Viewer</span><div style="left:234.60px;top:414.30px;width:784.70px;height:385.70px;background:#fcfcfc"></div><div style="left:238.50px;top:414.80px;width:778.00px;height:23.60px;background:#fbfbfb"></div><div style="left:238.50px;top:438.40px;width:434.30px;height:23.40px;background:#f3f3f3"></div><div style="left:672.80px;top:438.40px;width:343.70px;height:23.40px;background:#fafafa"></div><div style="left:238.50px;top:460.80px;width:778.00px;height:1.00px;background:#e4f2fb"></div><div style="left:239.70px;top:461.80px;width:776.20px;height:312.60px;background:#004080"></div><div style="left:242.30px;top:420.00px;width:1.20px;height:16.00px;background:repeating-linear-gradient(to bottom,#a8a8a8 0 1px,transparent 1px 3px)"></div><div style="left:242.30px;top:442.00px;width:1.20px;height:16.00px;background:repeating-linear-gradient(to bottom,#a8a8a8 0 1px,transparent 1px 3px)"></div><svg style="left:247.80px;top:421.80px" width="14" height="13" viewBox="0 0 14 13"><rect x="0.5" y="0.5" width="13" height="12" fill="#dfe8f0" stroke="#8a9aaa"/><path d="M2.5 2.5 L5.5 5.5 M2.5 2.5 L2.5 5 M2.5 2.5 L5 2.5 M11.5 2.5 L8.5 5.5 M11.5 2.5 L9 2.5 M11.5 2.5 L11.5 5 M2.5 10.5 L5.5 7.5 M2.5 10.5 L2.5 8 M2.5 10.5 L5 10.5 M11.5 10.5 L8.5 7.5 M11.5 10.5 L9 10.5 M11.5 10.5 L11.5 8" stroke="#2d5d80" stroke-width="1.2" fill="none"/></svg><svg style="left:265.70px;top:427.30px" width="5" height="3" viewBox="0 0 5 3"><path d="M0 0 L5 0 L2.5 3 Z" fill="#222"/></svg><div style="left:275.30px;top:420.00px;width:1.00px;height:17.00px;background:#c9c9c9"></div><svg style="left:281.00px;top:423.00px" width="11" height="11" viewBox="0 0 11 11"><rect x="0" y="0" width="3" height="3" fill="#2e6584"/><rect x="4" y="0" width="3" height="3" fill="#2e6584"/><rect x="8" y="0" width="3" height="3" fill="#2e6584"/><rect x="0" y="4" width="3" height="3" fill="#2e6584"/><rect x="4" y="4" width="3" height="3" fill="#2e6584"/><rect x="8" y="4" width="3" height="3" fill="#2e6584"/><rect x="0" y="8" width="3" height="3" fill="#2e6584"/><rect x="4" y="8" width="3" height="3" fill="#2e6584"/><rect x="8" y="8" width="3" height="3" fill="#2e6584"/></svg><svg style="left:299.40px;top:421.50px" width="12" height="13" viewBox="0 0 12 13"><path d="M1 12 L11 3" stroke="#6a3fb0" stroke-width="1.2"/><path d="M2 3 L4 5 M7 9 L11 9 M9 7 L9 12" stroke="#4a7a9a" stroke-width="1.1"/><circle cx="2.5" cy="2.5" r="1.5" fill="#333"/></svg><svg style="left:319.00px;top:422.00px" width="11" height="12" viewBox="0 0 11 12"><path d="M2.5 9.5 L8 3 A2 2 0 0 1 10 5.5 L4.5 11 A1.2 1.2 0 0 1 2.5 9.5" fill="none" stroke="#9a9a9a" stroke-width="1.1"/></svg><svg style="left:336.00px;top:421.50px" width="13" height="13" viewBox="0 0 13 13"><g fill="#6a5acd"><circle cx="2.5" cy="2.5" r="1.6"/><circle cx="7" cy="2" r="1.5"/><circle cx="11" cy="3" r="1.4"/><circle cx="4" cy="7" r="1.6"/><circle cx="9" cy="6.5" r="1.5"/><circle cx="2" cy="11" r="1.5"/><circle cx="7" cy="10.5" r="1.6"/><circle cx="11" cy="11" r="1.4"/></g><path d="M2.5 2.5 L11 11 M11 3 L2 11" stroke="#5a6ad0" stroke-width="1"/></svg><svg style="left:354.00px;top:421.30px" width="14" height="14" viewBox="0 0 14 14"><path d="M0.5 4.5 L9.5 4.5 L9.5 13.5 L0.5 13.5 Z M4.5 0.5 L13.5 0.5 L13.5 9.5 L4.5 9.5 Z M0.5 4.5 L4.5 0.5 M9.5 4.5 L13.5 0.5 M9.5 13.5 L13.5 9.5 M0.5 13.5 L4.5 9.5" fill="none" stroke="#777" stroke-width="1"/></svg><svg style="left:372.80px;top:422.00px" width="13" height="12" viewBox="0 0 13 12"><path d="M0 4 L10 1 L13 2 L13 9 L3 12 L0 11 Z" fill="#8a3b28"/><path d="M0 4 L10 1 L13 2 L3 5 Z" fill="#b0583c"/><path d="M3 5 L13 2 L13 9 L3 12 Z" fill="#7a2f20"/><circle cx="7" cy="7" r="1" fill="#d06040"/></svg><svg style="left:391.60px;top:421.80px" width="12" height="12" viewBox="0 0 12 12"><rect x="2" y="2" width="10" height="10" fill="#b8b8b8"/><rect x="0.5" y="0.5" width="9" height="9" fill="#ecd68c" stroke="#333"/></svg><svg style="left:410.50px;top:421.50px" width="13" height="13" viewBox="0 0 13 13"><defs><linearGradient id="gg" x1="0" y1="0" x2="0" y2="1"><stop offset="0" stop-color="#8cc868"/><stop offset="1" stop-color="#a6d98a"/></linearGradient></defs><rect x="0" y="0" width="13" height="13" fill="url(#gg)"/></svg><svg style="left:428.40px;top:424.50px" width="13" height="7" viewBox="0 0 13 7"><path d="M0.5 0 L0.5 7 M0.5 3.5 L8 3.5 M3 1.5 L3 5.5 M5 1.5 L5 5.5" stroke="#222" stroke-width="1.1"/><path d="M8.5 0.5 L10 0.5 A3 3 0 0 1 10 6.5 L8.5 6.5 Z" fill="none" stroke="#222" stroke-width="1.1"/></svg><svg style="left:449.50px;top:422.30px" width="10" height="11" viewBox="0 0 10 11"><path d="M9.5 0.5 L6 4 L1 3 L0 4 L4.5 6 L2.5 8.5 L0.8 8.3 L0.3 9 L2.2 10 L3 11 L3.7 10.5 L3.5 8.8 L6 6.5 L8 11 L9 10 L8 5 L10 1 Z" fill="#111"/></svg><div style="left:464.00px;top:418.40px;width:18.80px;height:19.10px;background:#f3f8fd;border:1px solid #3c7fb1;box-sizing:border-box"></div><svg style="left:467.00px;top:421.00px" width="13" height="13" viewBox="0 0 13 13"><path d="M1 1 L6.5 12 M12 1 L6.5 12 M2 5 L11 5 M3 9 L10 9" stroke="#222" stroke-width="1" fill="none"/><circle cx="2" cy="2" r="1.5" fill="#555"/><circle cx="11" cy="2" r="1.5" fill="#555"/></svg><div style="left:485.50px;top:420.00px;width:1.00px;height:17.00px;background:#c9c9c9"></div><svg style="left:489.40px;top:422.30px" width="12" height="11" viewBox="0 0 12 11"><defs><linearGradient id="cam" x1="0" y1="0" x2="1" y2="1"><stop offset="0" stop-color="#8fa6c8"/><stop offset="1" stop-color="#2a3f6a"/></linearGradient></defs><path d="M0 3 L3 0 L12 0 L12 8 L9 11 L0 11 Z" fill="url(#cam)"/><rect x="5" y="4" width="4" height="4" fill="#1a2a4a"/></svg><svg style="left:506.50px;top:427.30px" width="5" height="3" viewBox="0 0 5 3"><path d="M0 0 L5 0 L2.5 3 Z" fill="#222"/></svg><svg style="left:515.60px;top:421.50px" width="12.5" height="13" viewBox="0 0 12.5 13"><circle cx="6.2" cy="6.5" r="5.3" fill="none" stroke="#bcbcbc" stroke-width="1.2" stroke-dasharray="2 1"/><circle cx="6.2" cy="6.5" r="3" fill="none" stroke="#c8c8c8" stroke-width="1"/></svg><svg style="left:536.00px;top:422.00px" width="10" height="12" viewBox="0 0 10 12"><path d="M5 0 L10 2.5 L10 9.5 L5 12 L0 9.5 L0 2.5 Z" fill="#d83a2a"/><path d="M0 2.5 L5 5 L5 12 L0 9.5 Z" fill="#2f62b8"/><path d="M5 5 L10 2.5 L10 9.5 L5 12 Z" fill="#f0b020"/><path d="M3 6 L7 8" stroke="#30a040" stroke-width="1.5"/></svg><div style="left:550.00px;top:418.00px;width:18.75px;height:19.40px;background:#f3f8fd;border:1px solid #3c7fb1;box-sizing:border-box"></div><svg style="left:553.00px;top:421.50px" width="13" height="13" viewBox="0 0 13 13"><path d="M1 3 L8 0.5 L12.5 3 L12.5 10 L6 12.5 L1 10.5 Z" fill="#b86a50"/><path d="M1 3 L8 0.5 L12.5 3 L6 5.5 Z" fill="#cf8a6a"/><path d="M6 5.5 L12.5 3 L12.5 10 L6 12.5 Z" fill="#9a5038"/></svg><svg style="left:572.60px;top:422.30px" width="12" height="12" viewBox="0 0 12 12"><defs><radialGradient id="sph" cx="0.4" cy="0.35" r="0.7"><stop offset="0" stop-color="#c8c8c8"/><stop offset="0.55" stop-color="#6a6a6a"/><stop offset="1" stop-color="#2a2a2a"/></radialGradient></defs><circle cx="6" cy="6" r="5.8" fill="url(#sph)"/></svg><svg style="left:590.00px;top:421.50px" width="12" height="13" viewBox="0 0 12 13"><path d="M8 1 L5 4 L2 9 M5 4 L6 12 M5 4 L11 6" stroke="#8fb4d8" stroke-width="1.3" fill="none"/></svg><svg style="left:608.60px;top:421.60px" width="13" height="13" viewBox="0 0 13 13"><defs><pattern id="chk" x="0.5" y="0.5" width="6" height="6" patternUnits="userSpaceOnUse"><rect width="6" height="6" fill="#f4f4f4"/><rect width="3" height="3" fill="#111"/><rect x="3" y="3" width="3" height="3" fill="#111"/></pattern></defs><circle cx="6.5" cy="6.5" r="6" fill="url(#chk)" stroke="#111" stroke-width="1"/></svg><svg style="left:628.00px;top:421.80px" width="12" height="12" viewBox="0 0 12 12"><path d="M4.5 0.5 L7.5 0.5 L8 2.5 L11 9 L11.5 11.5 L0.5 11.5 L1 9 L4 2.5 Z" fill="#2a2a2a"/><path d="M4 2.5 L8 2.5 L9 6 L3 6 Z" fill="#555"/></svg><svg style="left:645.00px;top:421.50px" width="13.5" height="13" viewBox="0 0 13.5 13"><path d="M2 1.5 L8 7.5 M5 1 L11 7 M1 5 L7 11 M8 7.5 L8 4.5 M8 7.5 L5 7.5 M11 7 L11 4 M11 7 L8 7 M7 11 L7 8 M7 11 L4 11" stroke="#eed68a" stroke-width="1.5" fill="none"/></svg><svg style="left:664.40px;top:422.80px" width="13.6" height="10" viewBox="0 0 13.6 10"><path d="M0.8 6 Q6.8 0.5 12.8 6 Q6.8 10 0.8 6 Z" fill="#fff" stroke="#111" stroke-width="1.1"/><circle cx="6.8" cy="5.8" r="2.2" fill="#111"/><path d="M2.2 2.5 L1.5 1 M4.5 1.5 L4 0 M6.8 1.2 L6.8 0 M9 1.5 L9.5 0 M11.3 2.5 L12 1" stroke="#111" stroke-width="0.9"/></svg><svg style="left:684.00px;top:422.00px" width="10" height="12" viewBox="0 0 10 12"><path d="M2 4.5 Q4.5 2 8 3 M8 3 L6.5 0.8 M8 3 L5.2 4 M8 7.5 Q5.5 10 2 9 M2 9 L3.5 11.2 M2 9 L4.8 8" stroke="#6aa45a" stroke-width="1.7" fill="none"/></svg><svg style="left:701.50px;top:421.50px" width="14" height="13" viewBox="0 0 14 13"><ellipse cx="8" cy="8" rx="5.5" ry="4.8" fill="#d01818"/><ellipse cx="7" cy="6.5" rx="2" ry="1.5" fill="#f06060"/><path d="M3 6 L0.5 4" stroke="#a01010" stroke-width="1.6"/><circle cx="8" cy="2.2" r="1.3" fill="#c01010"/></svg><div style="left:720.50px;top:420.00px;width:1.00px;height:17.00px;background:#c9c9c9"></div><span class="t" style="left:725.60px;top:424.00px;font-size:10.5px;color:#1a1a1a;transform:scaleX(0.8153);">LOD</span><div style="left:747.40px;top:418.00px;width:61.60px;height:19.30px;background:#fff"></div><span class="t" style="left:751.30px;top:424.00px;font-size:10.5px;color:#1a1a1a;transform:scaleX(0.7822);">100</span><svg style="left:800.50px;top:427.50px" width="5" height="3" viewBox="0 0 5 3"><path d="M0 0 L5 0 L2.5 3 Z" fill="#222"/></svg><span class="t" style="left:811.90px;top:424.00px;font-size:10.5px;color:#1a1a1a;transform:scaleX(0.8710);">Livery</span><div style="left:840.50px;top:419.50px;width:121.30px;height:18.50px;background:#fff"></div><span class="t" style="left:843.80px;top:424.00px;font-size:10.5px;color:#1a1a1a;transform:scaleX(0.8771);">nato_lx-n90442</span><svg style="left:953.00px;top:427.50px" width="5" height="3" viewBox="0 0 5 3"><path d="M0 0 L5 0 L2.5 3 Z" fill="#222"/></svg><div style="left:962.00px;top:416.00px;width:54.50px;height:22.00px;background:#f2f2f2"></div><svg style="left:1006.50px;top:431.50px" width="8" height="7" viewBox="0 0 8 7"><rect x="0" y="0" width="8" height="7" fill="#d0d0d0"/><path d="M1.5 1 L6.5 1 M1.5 3 L6.5 3 L4 6 Z" stroke="#333" fill="#333" stroke-width="0.8"/></svg><svg style="left:251.00px;top:444.50px" width="9.5" height="12" viewBox="0 0 9.5 12"><path d="M0.7 0.7 L8.8 6 L0.7 11.3 Z" fill="none" stroke="#6a6a6a" stroke-width="1.2"/></svg><svg style="left:268.00px;top:444.50px" width="12" height="12" viewBox="0 0 12 12"><path d="M6 0.7 L0.7 6 L6 11.3 Z M11.3 0.7 L6 6 L11.3 11.3 Z" fill="none" stroke="#8a8a8a" stroke-width="1.1"/><path d="M11.5 1 L11.5 11" stroke="#8a8a8a" stroke-width="1.1"/></svg><div style="left:282.00px;top:440.50px;width:44.00px;height:19.50px;background:#fafafa"></div><span class="t" style="left:287.50px;top:445.00px;font-size:10.5px;color:#1a1a1a;transform:scaleX(0.8565);">0.0</span><svg style="left:328.75px;top:444.50px" width="12.5" height="12" viewBox="0 0 12.5 12"><path d="M0.7 0.7 L6 6 L0.7 11.3 Z M6 0.7 L11.3 6 L6 11.3 Z" fill="none" stroke="#8a8a8a" stroke-width="1.1"/></svg><div style="left:347.50px;top:442.00px;width:1.00px;height:17.00px;background:#c9c9c9"></div><div style="left:365.00px;top:447.50px;width:303.00px;height:3.00px;background:#e6e6e6;border:1px solid #d4d4d4;box-sizing:border-box"></div><svg style="left:355.80px;top:441.60px" width="9.4" height="15.6" viewBox="0 0 9.4 15.6"><path d="M0 1.5 Q0 0 1.5 0 L7.9 0 Q9.4 0 9.4 1.5 L9.4 11 L4.7 15.6 L0 11 Z" fill="#0a6fd0"/></svg><svg style="left:0;top:0" width="1024" height="825" viewBox="0 0 1024 825"><clipPath id="vpc"><rect x="239.7" y="461.8" width="776.2" height="312.6"/></clipPath><g clip-path="url(#vpc)">
<defs>
<linearGradient id="fus" gradientUnits="userSpaceOnUse" x1="596" y1="612" x2="612" y2="642"><stop offset="0" stop-color="#c2c2c2"/><stop offset="0.3" stop-color="#d6d6d6"/><stop offset="0.7" stop-color="#b4b4b4"/><stop offset="1" stop-color="#8c8c8c"/></linearGradient>
<linearGradient id="eng" gradientUnits="userSpaceOnUse" x1="0" y1="-6" x2="0" y2="6"><stop offset="0" stop-color="#c8c8c8"/><stop offset="1" stop-color="#808080"/></linearGradient>
<linearGradient id="fwing" gradientUnits="userSpaceOnUse" x1="560" y1="600" x2="600" y2="580"><stop offset="0" stop-color="#bdbdbd"/><stop offset="1" stop-color="#d2d2d2"/></linearGradient>
</defs>
<!-- far wing -->
<path d="M564 576.5 L574.5 573.6 L598 606 L605 617 L572 633 L569 612 Z" fill="url(#fwing)"/>
<path d="M598 606 L603 612 L572 626 L571 620 Z" fill="#a8a8a8"/>
<!-- far engines -->
<g transform="translate(558,607.5) rotate(-33)"><rect x="-11" y="-5.5" width="24" height="11" rx="3" fill="url(#eng)"/><ellipse cx="-11" cy="0" rx="2" ry="5.5" fill="#1a2a5a"/></g>
<g transform="translate(559.5,632) rotate(-30)"><rect x="-12" y="-5.5" width="25" height="11" rx="3" fill="url(#eng)"/><ellipse cx="-12" cy="0" rx="2" ry="5.5" fill="#1a2a5a"/></g>
<!-- far stabilizer -->
<path d="M673 571 L682 568 L688 576 L684 582 Z" fill="#d8d8d8"/>
<!-- fuselage -->
<path d="M490.9 690.9 Q494 679 503.6 670.9 L552.7 645.5 L607.3 618.2 L660 596.4 L703 580 L705.5 581.5 L693.75 595.6 L667 620 L660 627.3 L592.7 658.2 L552.7 678.2 L505.5 698.2 Q496 699 490.9 690.9 Z" fill="url(#fus)"/>
<path d="M495.5 685.5 L503.6 676.4 L517.3 674.5 L516.4 680 Z" fill="#2a2a2a"/>
<path d="M548 670 L598 647" stroke="#a8a8a8" stroke-width="1.3"/>
<path d="M585 651 L602 643" stroke="#777" stroke-width="2" stroke-dasharray="2 1"/>
<!-- rotodome struts -->
<path d="M637.5 588 L642 588 L645 603.4 L640.5 603.4 Z" fill="#9a9a9a"/>
<path d="M648.4 588 L653 588 L656 608 L651.5 608 Z" fill="#a8a8a8"/>
<!-- rotodome -->
<ellipse cx="647" cy="577" rx="30" ry="11" fill="#141414"/>
<path d="M634 566.5 L652 566 Q672 574 668 586 L656 588 Q662 576 634 566.5 Z" fill="#8e8e8e"/>
<!-- vertical fin -->
<path d="M680 590 L701 539.5 L709.5 539.5 L700 583 Z" fill="#a4a4a4"/>
<!-- near stabilizer -->
<path d="M695.3 583 L740.6 584.7 L736 587.8 L697 590 Z" fill="#d0d0d0"/>
<!-- near wing -->
<path d="M594 656.3 L640.9 637.6 L800.3 643.4 L807.3 636.4 L798 649.3 Z" fill="#c6c6c6"/>
<path d="M596 655.6 L798 648.6" stroke="#e2e2e2" stroke-width="1"/>
<!-- near engines -->
<path d="M652 656 L657 651 L660 654 L656 659 Z" fill="#9a9a9a"/>
<path d="M711 655 L716 650 L719 653 L715 658 Z" fill="#9a9a9a"/>
<g transform="translate(646,668.6) rotate(-30)"><rect x="-14" y="-6" width="28" height="12" rx="3" fill="url(#eng)"/><ellipse cx="-14" cy="0" rx="2.8" ry="6" fill="#0a1a4a"/><path d="M-16 -3 L-12 3 M-16 3 L-12 -3" stroke="#ddd" stroke-width="0.8"/></g>
<g transform="translate(706.5,667) rotate(-35)"><rect x="-13" y="-6" width="26" height="12" rx="3" fill="url(#eng)"/><ellipse cx="-13" cy="0" rx="2.8" ry="6" fill="#0a1a4a"/><path d="M-15 -3 L-11 3 M-15 3 L-11 -3" stroke="#ddd" stroke-width="0.8"/></g>
<path d="M623 659 L628 662" stroke="#e8e030" stroke-width="2.5"/>
</g></svg><div style="left:240.30px;top:777.00px;width:60.20px;height:16.30px;background:#f0f0f0;border-top:1px solid #fff;border-left:1px solid #fff;border-right:1.5px solid #8a8a8a;border-bottom:1.5px solid #8a8a8a;box-sizing:border-box"></div><svg style="left:241.50px;top:779.50px" width="12.5" height="12.5" viewBox="0 0 12.5 12.5"><defs><linearGradient id="rb" x1="0" y1="0" x2="1" y2="0"><stop offset="0" stop-color="#f08020"/><stop offset="0.18" stop-color="#f0e040"/><stop offset="0.36" stop-color="#50d050"/><stop offset="0.55" stop-color="#40a0f0"/><stop offset="0.75" stop-color="#8040d0"/><stop offset="1" stop-color="#e040a0"/></linearGradient><linearGradient id="rw" x1="0" y1="0" x2="0" y2="1"><stop offset="0" stop-color="#fff" stop-opacity="0.35"/><stop offset="0.6" stop-color="#fff" stop-opacity="0"/><stop offset="1" stop-color="#000" stop-opacity="0.55"/></linearGradient></defs><rect width="12.5" height="12.5" fill="url(#rb)"/><rect width="12.5" height="12.5" fill="url(#rw)"/></svg><span class="t" style="left:256.50px;top:781.00px;font-size:10.5px;color:#1a1a1a;transform:scaleX(0.8934);">Set Color</span><div style="left:301.40px;top:777.00px;width:37.10px;height:16.30px;background:#f0f0f0;border-top:1.5px solid #9a9a9a;border-left:1.5px solid #9a9a9a;border-right:1px solid #fff;border-bottom:1px solid #fff;box-sizing:border-box"></div><span class="t" style="left:304.40px;top:781.00px;font-size:10.5px;color:#1a1a1a;transform:scaleX(0.8653);">3 LODs</span><div style="left:340.50px;top:777.00px;width:84.90px;height:16.30px;background:#f0f0f0;border-top:1px solid #fff;border-left:1px solid #fff;border-right:1.5px solid #8a8a8a;border-bottom:1.5px solid #8a8a8a;box-sizing:border-box"></div><svg style="left:342.40px;top:779.50px" width="12" height="12" viewBox="0 0 12 12"><path d="M1 0.5 L1 5 L4 5" stroke="#111" stroke-width="1.3" fill="none"/><rect x="1.2" y="7" width="4" height="4.3" fill="none" stroke="#111" stroke-width="1.3"/><path d="M7.5 2 L7.5 8 M7.5 2 L9 2 Q11 2 11 5 Q11 8 9 8 L7.5 8" stroke="#111" stroke-width="1.2" fill="none"/></svg><span class="t" style="left:356.70px;top:781.00px;font-size:10.5px;color:#1a1a1a;transform:scaleX(0.8834);">Show LOD Info</span><div style="left:426.80px;top:777.00px;width:47.90px;height:16.30px;background:#f0f0f0;border-top:1.5px solid #9a9a9a;border-left:1.5px solid #9a9a9a;border-right:1px solid #fff;border-bottom:1px solid #fff;box-sizing:border-box"></div><span class="t" style="left:429.60px;top:781.00px;font-size:10.5px;color:#1a1a1a;transform:scaleX(0.8788);">2 Textures</span><div style="left:476.00px;top:777.00px;width:97.00px;height:16.30px;background:#f0f0f0;border-top:1px solid #fff;border-left:1px solid #fff;border-right:1.5px solid #8a8a8a;border-bottom:1.5px solid #8a8a8a;box-sizing:border-box"></div><svg style="left:478.80px;top:779.20px" width="12" height="12" viewBox="0 0 12 12"><defs><radialGradient id="glb" cx="0.4" cy="0.35" r="0.7"><stop offset="0" stop-color="#e0f0ff"/><stop offset="0.5" stop-color="#6aaee8"/><stop offset="1" stop-color="#2a6ab8"/></radialGradient></defs><circle cx="6" cy="6" r="5.8" fill="url(#glb)"/></svg><span class="t" style="left:493.30px;top:781.00px;font-size:10.5px;color:#1a1a1a;transform:scaleX(0.9028);">Show Texture Info</span><svg style="left:575.90px;top:779.20px" width="13.6" height="13" viewBox="0 0 13.6 13"><path d="M0.8 4.5 L0.8 0.8 L4.5 0.8 M9 0.8 L12.8 0.8 L12.8 4.5 M0.8 8.5 L0.8 12.2 L4.5 12.2 M9 12.2 L12.8 12.2 L12.8 8.5" stroke="#111" stroke-width="1.6" fill="none"/></svg><span class="t" style="left:591.70px;top:781.00px;font-size:10.5px;color:#1a1a1a;transform:scaleX(0.9016);">Set View Mode</span><svg style="left:662.20px;top:784.50px" width="5" height="3" viewBox="0 0 5 3"><path d="M0 0 L5 0 L2.5 3 Z" fill="#222"/></svg><div style="left:670.20px;top:777.00px;width:21.80px;height:16.30px;background:#f0f0f0;border-top:1px solid #fff;border-left:1px solid #fff;border-right:1.5px solid #8a8a8a;border-bottom:1.5px solid #8a8a8a;box-sizing:border-box"></div><span class="t" style="left:673.80px;top:781.00px;font-size:10.5px;color:#1a1a1a;transform:scaleX(0.8850);">Log</span><div style="left:694.00px;top:777.00px;width:123.20px;height:16.30px;background:#f0f0f0;border-top:1.5px solid #9a9a9a;border-left:1.5px solid #9a9a9a;border-right:1px solid #fff;border-bottom:1px solid #fff;box-sizing:border-box"></div><span class="t" style="left:718.65px;top:781.00px;font-size:10.5px;color:#1a1a1a;transform:scaleX(0.8944);">elvis_e3a p3d.mdl</span><div style="left:819.80px;top:777.00px;width:77.30px;height:16.30px;background:#f0f0f0;border-top:1.5px solid #9a9a9a;border-left:1.5px solid #9a9a9a;border-right:1px solid #fff;border-bottom:1px solid #fff;box-sizing:border-box"></div><span class="t" style="left:828.60px;top:781.00px;font-size:10.5px;color:#1a1a1a;transform:scaleX(0.8882);">nato_lx-n90442</span><div style="left:898.00px;top:777.00px;width:82.30px;height:16.30px;background:#f0f0f0;border-top:1px solid #fff;border-left:1px solid #fff;border-right:1.5px solid #8a8a8a;border-bottom:1.5px solid #8a8a8a;box-sizing:border-box"></div><svg style="left:899.80px;top:779.50px" width="12" height="12" viewBox="0 0 12 12"><rect x="0.5" y="0.5" width="11" height="11" fill="#fff" stroke="#333"/><path d="M3 3.5 L9 3.5 M3 6 L9 6 M3 8.5 L9 8.5" stroke="#222" stroke-width="1"/></svg><span class="t" style="left:914.40px;top:781.00px;font-size:10.5px;color:#1a1a1a;transform:scaleX(0.9612);">Toolbar on/off</span><svg style="left:991.70px;top:778.80px" width="13" height="13" viewBox="0 0 13 13"><defs><radialGradient id="inf" cx="0.35" cy="0.3" r="0.75"><stop offset="0" stop-color="#9ac0f0"/><stop offset="0.6" stop-color="#3a6ac8"/><stop offset="1" stop-color="#1a3a90"/></radialGradient></defs><circle cx="6.5" cy="6.5" r="6.3" fill="url(#inf)"/><rect x="5.6" y="2.5" width="1.8" height="8" fill="#fff"/></svg><svg style="left:1006.00px;top:782.00px" width="10" height="10" viewBox="0 0 10 10"><g fill="#b0b0b0"><rect x="7" y="1" width="1.5" height="1.5"/><rect x="4" y="4" width="1.5" height="1.5"/><rect x="7" y="4" width="1.5" height="1.5"/><rect x="1" y="7" width="1.5" height="1.5"/><rect x="4" y="7" width="1.5" height="1.5"/><rect x="7" y="7" width="1.5" height="1.5"/></g></svg><div style="left:1.00px;top:800.00px;width:1023.00px;height:25.00px;background:#f0f0f0"></div><div style="left:1.00px;top:800.00px;width:1023.00px;height:1.00px;background:#e8e8e8"></div><div style="left:2.50px;top:805.80px;width:37.50px;height:13.70px;background:#f0f0f0;border-top:1.2px solid #8a8a8a;border-left:1.2px solid #8a8a8a;border-right:1px solid #fff;border-bottom:1px solid #fff;box-sizing:border-box"></div><span class="t" style="left:13.95px;top:809.00px;font-size:10.5px;color:#1a1a1a;transform:scaleX(0.7530);">FS9</span><div style="left:42.40px;top:805.80px;width:107.90px;height:13.70px;background:#0a7f0a;border-top:1.2px solid #2a4a2a;border-left:1.2px solid #2a4a2a;border-right:1px solid #7fd27f;border-bottom:1px solid #7fd27f;box-sizing:border-box"></div><span class="t" style="left:48.20px;top:809.00px;font-size:10.5px;color:#fff;transform:scaleX(0.8478);">FSX (10.0.61637.0-Acc)</span><div style="left:153.00px;top:805.80px;width:36.80px;height:13.70px;background:#fafafa;border-top:1.2px solid #9a9a9a;border-left:1.2px solid #9a9a9a;border-right:1px solid #fff;border-bottom:1px solid #fff;box-sizing:border-box"></div><span class="t" style="left:156.40px;top:809.00px;font-size:10.5px;color:#1a1a1a;transform:scaleX(0.7567);">FSX-SE</span><div style="left:191.40px;top:805.80px;width:38.80px;height:13.70px;background:#f0f0f0;border-top:1.2px solid #8a8a8a;border-left:1.2px solid #8a8a8a;border-right:1px solid #fff;border-bottom:1px solid #fff;box-sizing:border-box"></div><span class="t" style="left:198.00px;top:809.00px;font-size:10.5px;color:#1a1a1a;transform:scaleX(0.8505);">P3Dv1</span><div style="left:233.00px;top:805.80px;width:37.70px;height:13.70px;background:#f0f0f0;border-top:1.2px solid #8a8a8a;border-left:1.2px solid #8a8a8a;border-right:1px solid #fff;border-bottom:1px solid #fff;box-sizing:border-box"></div><span class="t" style="left:239.00px;top:809.00px;font-size:10.5px;color:#1a1a1a;transform:scaleX(0.8315);">P3Dv2</span><div style="left:273.40px;top:805.80px;width:37.50px;height:13.70px;background:#f0f0f0;border-top:1.2px solid #8a8a8a;border-left:1.2px solid #8a8a8a;border-right:1px solid #fff;border-bottom:1px solid #fff;box-sizing:border-box"></div><span class="t" style="left:279.50px;top:809.00px;font-size:10.5px;color:#1a1a1a;transform:scaleX(0.8219);">P3Dv3</span><div style="left:313.60px;top:805.80px;width:100.40px;height:13.70px;background:#0a7f0a;border-top:1.2px solid #2a4a2a;border-left:1.2px solid #2a4a2a;border-right:1px solid #7fd27f;border-bottom:1px solid #7fd27f;box-sizing:border-box"></div><span class="t" style="left:320.50px;top:809.00px;font-size:10.5px;color:#fff;transform:scaleX(0.8381);">P3Dv4 (4.5.14.34698)</span><div style="left:511.50px;top:805.80px;width:74.60px;height:13.70px;background:#0a7f0a;border-top:1.2px solid #2a4a2a;border-left:1.2px solid #2a4a2a;border-right:1px solid #7fd27f;border-bottom:1px solid #7fd27f;box-sizing:border-box"></div><span class="t" style="left:528.70px;top:809.00px;font-size:10.5px;color:#fff;transform:scaleX(0.8843);">AC Folder</span><div style="left:587.50px;top:805.80px;width:77.90px;height:13.70px;background:#0a7f0a;border-top:1.2px solid #2a4a2a;border-left:1.2px solid #2a4a2a;border-right:1px solid #7fd27f;border-bottom:1px solid #7fd27f;box-sizing:border-box"></div><span class="t" style="left:596.30px;top:809.00px;font-size:10.5px;color:#fff;transform:scaleX(0.8803);">AC Status: OK</span><div style="left:666.80px;top:805.80px;width:138.60px;height:13.70px;background:#f0f0f0;border-top:1.2px solid #9a9a9a;border-left:1.2px solid #9a9a9a;border-right:1px solid #fff;border-bottom:1px solid #fff;box-sizing:border-box"></div><span class="t" style="left:675.20px;top:809.00px;font-size:10.5px;color:#1a1a1a;transform:scaleX(0.9120);">17 aircraft variations defined</span><div style="left:856.70px;top:806.50px;width:97.80px;height:13.50px;background:#f0f0f0;border-top:1px solid #fff;border-left:1px solid #fff;border-right:1.2px solid #8a8a8a;border-bottom:1.2px solid #8a8a8a;box-sizing:border-box"></div><span class="t" style="left:860.60px;top:809.00px;font-size:10.5px;color:#a01010;font-weight:bold;transform:scaleX(0.8876);">Show Aircraft Errors</span><svg style="left:1011.00px;top:812.00px" width="10" height="10" viewBox="0 0 10 10"><g fill="#b0b0b0"><rect x="7" y="1" width="1.5" height="1.5"/><rect x="4" y="4" width="1.5" height="1.5"/><rect x="7" y="4" width="1.5" height="1.5"/><rect x="1" y="7" width="1.5" height="1.5"/><rect x="4" y="7" width="1.5" height="1.5"/><rect x="7" y="7" width="1.5" height="1.5"/></g></svg><div style="left:1.00px;top:822.00px;width:1023.00px;height:3.00px;background:#c4c4c4"></div><div style="left:45.00px;top:822.00px;width:17.00px;height:1.50px;background:repeating-linear-gradient(to right,#555 0 2px,transparent 2px 4px)"></div><div style="left:215.00px;top:822.00px;width:38.00px;height:1.50px;background:repeating-linear-gradient(to right,#555 0 2px,transparent 2px 4px)"></div><div style="left:400.00px;top:822.00px;width:40.00px;height:1.50px;background:repeating-linear-gradient(to right,#555 0 2px,transparent 2px 4px)"></div><div style="left:590.00px;top:822.00px;width:38.00px;height:1.50px;background:repeating-linear-gradient(to right,#555 0 2px,transparent 2px 4px)"></div>
</body></html>
